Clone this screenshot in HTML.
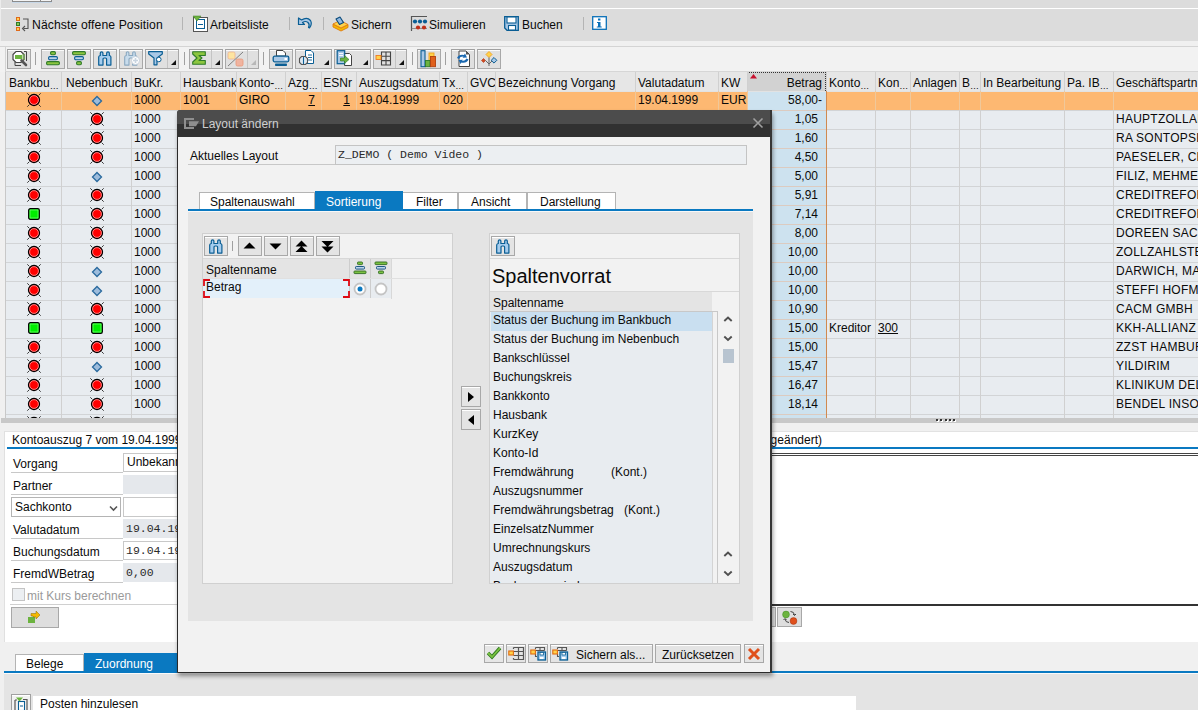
<!DOCTYPE html><html><head><meta charset="utf-8"><style>
*{box-sizing:border-box}
html,body{margin:0;padding:0;width:1198px;height:710px;overflow:hidden;background:#f0f0f0;font-family:"Liberation Sans",sans-serif;font-size:12px;color:#0a0a0a}
div{position:absolute}
.t{white-space:nowrap;line-height:19px;height:19px}
.m{font-family:"Liberation Mono",monospace;font-size:11.5px;color:#2a2a2a}
svg{position:absolute;overflow:visible}
</style></head><body>
<div style="left:0px;top:0px;width:1198px;height:8px;background:#dcdcdc"></div>
<div style="left:12px;top:-9px;width:40px;height:11px;background:#f4f4f4;border:1px solid #8c8c8c;border-top:none;box-shadow:0 1px 0 #c8d8e8"></div>
<div style="left:40px;top:-9px;width:1px;height:11px;background:#8c8c8c"></div>
<div style="left:0px;top:8px;width:1198px;height:1px;background:#ffffff"></div>
<div style="left:0px;top:9px;width:1198px;height:32px;background:#dcdcdc"></div>
<div style="left:0px;top:41px;width:1198px;height:5px;background:#f0f0f0"></div>
<div style="left:0px;top:0px;width:1px;height:41px;background:#ececec"></div>
<div style="left:182px;top:17px;width:1px;height:13px;background:#b4b4b4"></div>
<div style="left:289px;top:17px;width:1px;height:13px;background:#b4b4b4"></div>
<div style="left:323px;top:17px;width:1px;height:13px;background:#b4b4b4"></div>
<div style="left:583px;top:17px;width:1px;height:13px;background:#b4b4b4"></div>
<svg style="left:15px;top:16px" width="16" height="16" viewBox="0 0 16 16">
<rect x="1.5" y="1.5" width="3" height="3" fill="#ffd050" stroke="#e06a1a" stroke-width="1"/>
<rect x="1.5" y="6.5" width="3" height="3" fill="#8cc850" stroke="#2f7a2a" stroke-width="1"/>
<rect x="1.5" y="11.5" width="3" height="3" fill="#ffd050" stroke="#e06a1a" stroke-width="1"/>
<path d="M8 3H13V12.5H8.5" fill="none" stroke="#555" stroke-width="1.1"/>
<path d="M10 10L7.5 12.5L10 15" fill="none" stroke="#555" stroke-width="1.1"/></svg>
<svg style="left:193px;top:16px" width="16" height="16" viewBox="0 0 16 16">
<rect x="0.5" y="1.5" width="14" height="14" fill="#fff" stroke="#555" stroke-width="1"/>
<rect x="3.5" y="3.5" width="8" height="9" fill="#fff" stroke="#0a5e94" stroke-width="1"/>
<path d="M5 8.5H10" stroke="#0a5e94" stroke-width="1"/>
<path d="M0 0H8L4 5Z" fill="#6cb33f" stroke="#3a7a20" stroke-width="0.5"/></svg>
<svg style="left:297px;top:16px" width="17" height="13" viewBox="0 0 17 13">
<path d="M1.5 2V8.5H7.5L5.5 6.5Q8.5 4.5 11 6.5Q13 8.5 11.5 11.5L12.5 12Q15.5 8 13.5 4.5Q10 0.5 4.5 4Z" fill="#a9c8e6" stroke="#0a5e94" stroke-width="1.2" stroke-linejoin="round"/></svg>
<svg style="left:332px;top:16px" width="17" height="16" viewBox="0 0 17 16">
<path d="M1 8L9 12L16 8.5V11.5L9 15L1 11Z" fill="#f5b800" stroke="#e07a10" stroke-width="0.9"/>
<path d="M1 8L8 4.5L16 8.5L9 12Z" fill="#ffd24a" stroke="#e07a10" stroke-width="0.9"/>
<path d="M4 3L8 1L11.5 6.5L7.5 8.5Z" fill="#8fb8e0" stroke="#0a4a7a" stroke-width="1.1" stroke-linejoin="round"/></svg>
<svg style="left:410px;top:15px" width="18" height="17" viewBox="0 0 18 17">
<path d="M1.5 16V1.5H17" fill="none" stroke="#555" stroke-width="1.2"/>
<path d="M1.5 13.5H17" stroke="#777" stroke-width="0.8"/>
<circle cx="5" cy="6.5" r="2.1" fill="#0a5e94"/><circle cx="10" cy="6.5" r="2.1" fill="#0a5e94"/><circle cx="15" cy="6.5" r="2.1" fill="#0a5e94"/>
<circle cx="8" cy="12.5" r="2.1" fill="#c03018"/><circle cx="14" cy="12.5" r="2.1" fill="#c03018"/></svg>
<svg style="left:504px;top:16px" width="16" height="16" viewBox="0 0 16 16">
<path d="M0.7 0.7H14.3V14.3H3L0.7 12Z" fill="#a9c8e6" stroke="#0a5e94" stroke-width="1.3"/>
<rect x="3" y="1" width="9" height="6" fill="#fff" stroke="#0a5e94" stroke-width="1.1"/>
<rect x="4.5" y="9.5" width="7" height="4.5" fill="#fff" stroke="#0a5e94" stroke-width="1.1"/></svg>
<svg style="left:592px;top:16px" width="15" height="14" viewBox="0 0 15 14">
<rect x="0.7" y="0.7" width="13.6" height="12.6" fill="#fff" stroke="#0a70b8" stroke-width="1.3"/>
<rect x="6" y="2.5" width="2.4" height="2" fill="#0a70b8"/>
<path d="M5 6H8.5V10.5H9.7V11.5H4.8V10.5H6V7H5Z" fill="#0a70b8"/></svg>
<div class="t" style="left:32px;top:16px;font-size:12.2px;letter-spacing:0.1px">Nächste offene Position</div>
<div class="t" style="left:210px;top:16px;">Arbeitsliste</div>
<div class="t" style="left:351px;top:16px;">Sichern</div>
<div class="t" style="left:429px;top:16px;">Simulieren</div>
<div class="t" style="left:522px;top:16px;">Buchen</div>
<div style="left:0px;top:46px;width:1198px;height:26px;background:#f2f2f2;border-top:1px solid #d4d4d4"></div>
<div style="left:5px;top:46px;width:1px;height:26px;background:#d4d4d4"></div>
<div style="left:7px;top:49px;width:24px;height:20px;background:#e0e0e0;border:1px solid #a8a8a8;border-top-color:#a0a0a0;box-shadow:inset 0 1px 0 #fafafa;"></div>
<div style="left:41px;top:49px;width:24px;height:20px;background:#e0e0e0;border:1px solid #a8a8a8;border-top-color:#a0a0a0;box-shadow:inset 0 1px 0 #fafafa;"></div>
<div style="left:67px;top:49px;width:24px;height:20px;background:#e0e0e0;border:1px solid #a8a8a8;border-top-color:#a0a0a0;box-shadow:inset 0 1px 0 #fafafa;"></div>
<div style="left:93px;top:49px;width:24px;height:20px;background:#e0e0e0;border:1px solid #a8a8a8;border-top-color:#a0a0a0;box-shadow:inset 0 1px 0 #fafafa;"></div>
<div style="left:119px;top:49px;width:24px;height:20px;background:#e0e0e0;border:1px solid #a8a8a8;border-top-color:#a0a0a0;box-shadow:inset 0 1px 0 #fafafa;"></div>
<div style="left:145px;top:49px;width:34px;height:20px;background:#e0e0e0;border:1px solid #a8a8a8;border-top-color:#a0a0a0;box-shadow:inset 0 1px 0 #fafafa;"></div>
<div style="left:167px;top:50px;width:1px;height:18px;background:#c4c4c4"></div>
<svg style="left:171px;top:60px" width="6" height="6"><path d="M5 0L5 5L0 5Z" fill="#111"/></svg>
<div style="left:189px;top:49px;width:34px;height:20px;background:#e0e0e0;border:1px solid #a8a8a8;border-top-color:#a0a0a0;box-shadow:inset 0 1px 0 #fafafa;"></div>
<div style="left:211px;top:50px;width:1px;height:18px;background:#c4c4c4"></div>
<svg style="left:215px;top:60px" width="6" height="6"><path d="M5 0L5 5L0 5Z" fill="#111"/></svg>
<div style="left:225px;top:49px;width:34px;height:20px;background:#e0e0e0;border:1px solid #a8a8a8;border-top-color:#a0a0a0;box-shadow:inset 0 1px 0 #fafafa;"></div>
<div style="left:247px;top:50px;width:1px;height:18px;background:#c4c4c4"></div>
<svg style="left:251px;top:60px" width="6" height="6"><path d="M5 0L5 5L0 5Z" fill="#b8b8b8"/></svg>
<div style="left:269px;top:49px;width:24px;height:20px;background:#e0e0e0;border:1px solid #a8a8a8;border-top-color:#a0a0a0;box-shadow:inset 0 1px 0 #fafafa;"></div>
<div style="left:295px;top:49px;width:37px;height:20px;background:#e0e0e0;border:1px solid #a8a8a8;border-top-color:#a0a0a0;box-shadow:inset 0 1px 0 #fafafa;"></div>
<svg style="left:324px;top:60px" width="6" height="6"><path d="M5 0L5 5L0 5Z" fill="#111"/></svg>
<div style="left:334px;top:49px;width:37px;height:20px;background:#e0e0e0;border:1px solid #a8a8a8;border-top-color:#a0a0a0;box-shadow:inset 0 1px 0 #fafafa;"></div>
<svg style="left:363px;top:60px" width="6" height="6"><path d="M5 0L5 5L0 5Z" fill="#111"/></svg>
<div style="left:373px;top:49px;width:34px;height:20px;background:#e0e0e0;border:1px solid #a8a8a8;border-top-color:#a0a0a0;box-shadow:inset 0 1px 0 #fafafa;"></div>
<div style="left:395px;top:50px;width:1px;height:18px;background:#c4c4c4"></div>
<svg style="left:399px;top:60px" width="6" height="6"><path d="M5 0L5 5L0 5Z" fill="#111"/></svg>
<div style="left:417px;top:49px;width:24px;height:20px;background:#e0e0e0;border:1px solid #a8a8a8;border-top-color:#a0a0a0;box-shadow:inset 0 1px 0 #fafafa;"></div>
<div style="left:451px;top:49px;width:24px;height:20px;background:#e0e0e0;border:1px solid #a8a8a8;border-top-color:#a0a0a0;box-shadow:inset 0 1px 0 #fafafa;"></div>
<div style="left:477px;top:49px;width:24px;height:20px;background:#e0e0e0;border:1px solid #a8a8a8;border-top-color:#a0a0a0;box-shadow:inset 0 1px 0 #fafafa;"></div>
<svg style="left:11px;top:50px" width="18" height="17" viewBox="0 0 18 17"><path d="M5 1.5H10L13 4.5V9.5L10 12.5H5L2 9.5V4.5Z" fill="#fff" stroke="#444" stroke-width="1.2"/>
<rect x="4" y="5" width="7" height="4" fill="#6cb33f"/>
<path d="M11 5H14M11 7H14M11 9H14" stroke="#6cb33f" stroke-width="0.9"/>
<path d="M13 1.5H15.5V11" fill="none" stroke="#444" stroke-width="1"/>
<path d="M4 12V15.5H10" fill="none" stroke="#444" stroke-width="1"/>
<path d="M10.5 10.5L15 15" stroke="#555" stroke-width="2.6" stroke-linecap="round"/></svg>
<svg style="left:46px;top:51px" width="14" height="15" viewBox="0 0 14 15"><rect x="4.6" y="0.6" width="4.8" height="3.2" rx="1.2" fill="#8cc63f" stroke="#2f7a2a" stroke-width="1.1"/><rect x="2.6" y="5.6" width="8.8" height="3.2" rx="1.2" fill="#bcd4ea" stroke="#0a5e94" stroke-width="1.1"/><rect x="0.6" y="10.6" width="12.8" height="3.2" rx="1.2" fill="#8cc63f" stroke="#2f7a2a" stroke-width="1.1"/></svg>
<svg style="left:72px;top:51px" width="14" height="15" viewBox="0 0 14 15"><rect x="0.6" y="0.6" width="12.8" height="3.2" rx="1.2" fill="#8cc63f" stroke="#2f7a2a" stroke-width="1.1"/><rect x="2.6" y="5.6" width="8.8" height="3.2" rx="1.2" fill="#bcd4ea" stroke="#0a5e94" stroke-width="1.1"/><rect x="4.6" y="10.6" width="4.8" height="3.2" rx="1.2" fill="#8cc63f" stroke="#2f7a2a" stroke-width="1.1"/></svg>
<svg style="left:97px;top:51px" width="16" height="15" viewBox="0 0 16 15"><path d="M1.7 14.1V6Q1.7 4.8 3.3 4.5V1.9Q3.3 0.8 4.6 0.8Q5.9 0.8 5.9 1.9V4.5H9.7V1.9Q9.7 0.8 11 0.8Q12.3 0.8 12.3 1.9V4.5Q13.9 4.8 13.9 6V14.1H9.6V8.2Q9.6 7 8.4 7H7.2Q6 7 6 8.2V14.1Z" fill="#a6cdee" stroke="#0a5e94" stroke-width="1.2" stroke-linejoin="round"/></svg>
<svg style="left:123px;top:51px" width="18" height="15" viewBox="0 0 18 15"><path d="M1.7 14.1V6Q1.7 4.8 3.3 4.5V1.9Q3.3 0.8 4.6 0.8Q5.9 0.8 5.9 1.9V4.5H9.7V1.9Q9.7 0.8 11 0.8Q12.3 0.8 12.3 1.9V4.5Q13.9 4.8 13.9 6V14.1H9.6V8.2Q9.6 7 8.4 7H7.2Q6 7 6 8.2V14.1Z" fill="#c8dcec" stroke="#8aa8c0" stroke-width="1.1" stroke-linejoin="round"/>
<circle cx="12.5" cy="9.5" r="4" fill="#fff" stroke="#c0ccd8" stroke-width="0.8"/><path d="M10 9.5H15M12.5 7V12" stroke="#c8d4e0" stroke-width="1.6"/></svg>
<svg style="left:148px;top:51px" width="15" height="15" viewBox="0 0 15 15"><path d="M0.7 0.7H14.3V3L9 7V13.8H6V7L0.7 3Z" fill="#a9c8e6" stroke="#0a5e94" stroke-width="1.2" stroke-linejoin="round"/>
<circle cx="10.8" cy="8.5" r="2.3" fill="#fff" stroke="#0a5e94" stroke-width="1"/></svg>
<svg style="left:192px;top:51px" width="14" height="14" viewBox="0 0 14 14"><path d="M0.7 0.7H13.3V4.5H7L10 7L7 9.5H13.3V13.3H0.7V11L5 7L0.7 3Z" fill="#8cc63f" stroke="#2f7a2a" stroke-width="1.1" stroke-linejoin="round"/></svg>
<svg style="left:227px;top:51px" width="20" height="16" viewBox="0 0 20 16"><rect x="1" y="1" width="7" height="7" rx="1.5" fill="#fde4a0" stroke="#f0b090" stroke-width="0.8"/>
<rect x="9" y="8" width="7" height="7" rx="1.5" fill="#f0b4a0" stroke="#e89878" stroke-width="0.8"/>
<path d="M1 15L16 1" stroke="#555" stroke-width="0.7"/></svg>
<svg style="left:272px;top:50px" width="18" height="17" viewBox="0 0 18 17"><path d="M4.5 0.5H11L13.5 3V6H4.5Z" fill="#fff" stroke="#444" stroke-width="1"/>
<rect x="1.2" y="6.2" width="15.6" height="5.6" rx="1.5" fill="#a9c8e6" stroke="#0a5e94" stroke-width="1.3"/>
<rect x="12.5" y="8" width="2.5" height="2" fill="#fff"/>
<rect x="3" y="13.5" width="12" height="2.5" rx="0.8" fill="#0a5e94"/></svg>
<svg style="left:298px;top:50px" width="17" height="17" viewBox="0 0 17 17"><path d="M7.5 0.5H13L15.5 3V13.5H7.5Z" fill="#fff" stroke="#0a5e94" stroke-width="1"/>
<path d="M10 5H14M10 7.5H14M10 10H14" stroke="#0a5e94" stroke-width="0.9"/>
<path d="M3.5 6.5H7.5L9.5 8.5V12.5L7.5 14.5H3.5L1.5 12.5V8.5Z" fill="#dfe9f2" stroke="#555" stroke-width="1.1"/>
<path d="M5.5 7V14" stroke="#0a5e94" stroke-width="1.1"/></svg>
<svg style="left:336px;top:50px" width="17" height="17" viewBox="0 0 17 17"><path d="M8.5 3.5H13.5L15.5 5.5V15.5H8.5Z" fill="#fff" stroke="#444" stroke-width="1"/>
<rect x="1.2" y="0.7" width="7.5" height="13" fill="#a9c8e6" stroke="#0a5e94" stroke-width="1.2"/>
<path d="M3 3.5H7M3 5.5H7" stroke="#fff" stroke-width="0.9"/>
<path d="M4.5 8H8.5V5.5L13 9.5L8.5 13.5V11H4.5Z" fill="#6cb33f" stroke="#2f7a2a" stroke-width="0.6"/></svg>
<svg style="left:375px;top:51px" width="17" height="15" viewBox="0 0 17 15"><path d="M6.5 1H15.5V14H6.5ZM6.5 5.3H15.5M6.5 9.6H15.5M11 1V14" fill="none" stroke="#444" stroke-width="1.1"/>
<rect x="1" y="4.5" width="5" height="4" fill="#ffd24a" stroke="#f07a20" stroke-width="0.9"/></svg>
<svg style="left:420px;top:50px" width="18" height="18" viewBox="0 0 18 18"><rect x="1" y="0.7" width="4" height="16" fill="#a9c8e6" stroke="#0a5e94" stroke-width="1.1"/>
<rect x="9" y="3" width="5" height="8" fill="#ffd24a" stroke="#f0a020" stroke-width="0.9"/>
<rect x="5.5" y="10.5" width="4.5" height="6.2" fill="#6cb33f" stroke="#2f7a2a" stroke-width="0.9"/>
<rect x="10.5" y="6.5" width="5" height="10.2" fill="#e0601c" stroke="#b04010" stroke-width="0.9"/></svg>
<svg style="left:454px;top:50px" width="18" height="18" viewBox="0 0 18 18"><path d="M5 1H12L15.5 4.5V16.5H5Z" fill="#fff" stroke="#444" stroke-width="1"/><path d="M12 1V4.5H15.5Z" fill="#555"/>
<path d="M3 8Q5 4 10 5L11 3.5L13 7.5L8.5 7.8L9.5 6.6Q6 6.5 5 9Z" fill="#1a68b0"/>
<path d="M14.5 9.5Q12.5 13.5 7.5 12.5L6.5 14L4.5 10L9 9.7L8 10.9Q11.5 11 12.5 8.5Z" fill="#1a68b0"/></svg>
<svg style="left:480px;top:50px" width="18" height="18" viewBox="0 0 18 18"><path d="M9 1.5L12 4.5L9 7.5L6 4.5Z" fill="#ffd24a" stroke="#f0a020" stroke-width="0.9"/>
<path d="M14 7.5L16.8 10.3L14 13.1L11.2 10.3Z" fill="#a9c8e6" stroke="#0a5e94" stroke-width="1"/>
<path d="M3.5 8.5L5.5 10.5L3.5 12.5L1.5 10.5Z" fill="#d04a20" stroke="#b03010" stroke-width="0.6"/>
<path d="M9 7.5V16M5.5 10.5L9 14L12 11" fill="none" stroke="#666" stroke-width="1"/></svg>
<div style="left:35px;top:52px;width:1px;height:13px;background:#a0a0a0"></div>
<div style="left:184px;top:52px;width:1px;height:13px;background:#a0a0a0"></div>
<div style="left:263px;top:52px;width:1px;height:13px;background:#a0a0a0"></div>
<div style="left:412px;top:52px;width:1px;height:13px;background:#a0a0a0"></div>
<div style="left:445px;top:52px;width:1px;height:13px;background:#a0a0a0"></div>
<div style="left:6px;top:72px;width:1192px;height:346px;background:#e8ecf0"></div>
<div style="left:5px;top:71px;width:1193px;height:1px;background:#d6d6d6"></div>
<div style="left:6px;top:72px;width:1192px;height:19px;background:#e6e6e6"></div>
<div style="left:6px;top:91px;width:1192px;height:1px;background:#ffffff"></div>
<div class="t" style="left:6px;top:74px;width:55px;text-align:left;padding-left:3px;overflow:hidden">Bankbu<span style="font-size:9px;letter-spacing:-0.5px;vertical-align:-2px">…</span></div>
<div class="t" style="left:61px;top:74px;width:70px;text-align:left;padding-left:5px;overflow:hidden">Nebenbuch</div>
<div style="left:61px;top:72px;width:1px;height:19px;background:#d0d0d0"></div>
<div class="t" style="left:131px;top:74px;width:49px;text-align:left;padding-left:3px;overflow:hidden">BuKr.</div>
<div style="left:131px;top:72px;width:1px;height:19px;background:#d0d0d0"></div>
<div class="t" style="left:180px;top:74px;width:56px;text-align:left;padding-left:3px;overflow:hidden">Hausbank</div>
<div style="left:180px;top:72px;width:1px;height:19px;background:#d0d0d0"></div>
<div class="t" style="left:236px;top:74px;width:49px;text-align:left;padding-left:3px;overflow:hidden">Konto-<span style="font-size:9px;letter-spacing:-0.5px;vertical-align:-2px">…</span></div>
<div style="left:236px;top:72px;width:1px;height:19px;background:#d0d0d0"></div>
<div class="t" style="left:285px;top:74px;width:36px;text-align:left;padding-left:3px;overflow:hidden">Azg<span style="font-size:9px;letter-spacing:-0.5px;vertical-align:-2px">…</span></div>
<div style="left:285px;top:72px;width:1px;height:19px;background:#d0d0d0"></div>
<div class="t" style="left:321px;top:74px;width:35px;text-align:right;padding-right:4px;overflow:hidden">ESNr</div>
<div style="left:321px;top:72px;width:1px;height:19px;background:#d0d0d0"></div>
<div class="t" style="left:356px;top:74px;width:83px;text-align:left;padding-left:3px;overflow:hidden">Auszugsdatum</div>
<div style="left:356px;top:72px;width:1px;height:19px;background:#d0d0d0"></div>
<div class="t" style="left:439px;top:74px;width:28px;text-align:left;padding-left:3px;overflow:hidden">Tx<span style="font-size:9px;letter-spacing:-0.5px;vertical-align:-2px">…</span></div>
<div style="left:439px;top:72px;width:1px;height:19px;background:#d0d0d0"></div>
<div class="t" style="left:467px;top:74px;width:28px;text-align:left;padding-left:3px;overflow:hidden">GVC</div>
<div style="left:467px;top:72px;width:1px;height:19px;background:#d0d0d0"></div>
<div class="t" style="left:495px;top:74px;width:140px;text-align:left;padding-left:3px;overflow:hidden">Bezeichnung Vorgang</div>
<div style="left:495px;top:72px;width:1px;height:19px;background:#d0d0d0"></div>
<div class="t" style="left:635px;top:74px;width:83px;text-align:left;padding-left:3px;overflow:hidden">Valutadatum</div>
<div style="left:635px;top:72px;width:1px;height:19px;background:#d0d0d0"></div>
<div class="t" style="left:718px;top:74px;width:29px;text-align:left;padding-left:3px;overflow:hidden">KW</div>
<div style="left:718px;top:72px;width:1px;height:19px;background:#d0d0d0"></div>
<div style="left:747px;top:72px;width:79px;height:19px;background:#d2d2d2;border:1px dotted #333;border-bottom:none"></div>
<svg style="left:750px;top:74px" width="8" height="5"><path d="M0 4.5L3.5 0L7 4.5Z" fill="#c8102e"/></svg>
<div class="t" style="left:747px;top:74px;width:79px;text-align:right;padding-right:4px;overflow:hidden">Betrag</div>
<div style="left:747px;top:72px;width:1px;height:19px;background:#d0d0d0"></div>
<div class="t" style="left:826px;top:74px;width:49px;text-align:left;padding-left:3px;overflow:hidden">Konto<span style="font-size:9px;letter-spacing:-0.5px;vertical-align:-2px">…</span></div>
<div style="left:826px;top:72px;width:1px;height:19px;background:#d0d0d0"></div>
<div class="t" style="left:875px;top:74px;width:35px;text-align:left;padding-left:3px;overflow:hidden">Kon<span style="font-size:9px;letter-spacing:-0.5px;vertical-align:-2px">…</span></div>
<div style="left:875px;top:72px;width:1px;height:19px;background:#d0d0d0"></div>
<div class="t" style="left:910px;top:74px;width:49px;text-align:left;padding-left:3px;overflow:hidden">Anlagen</div>
<div style="left:910px;top:72px;width:1px;height:19px;background:#d0d0d0"></div>
<div class="t" style="left:959px;top:74px;width:21px;text-align:left;padding-left:3px;overflow:hidden">B<span style="font-size:9px;letter-spacing:-0.5px;vertical-align:-2px">…</span></div>
<div style="left:959px;top:72px;width:1px;height:19px;background:#d0d0d0"></div>
<div class="t" style="left:980px;top:74px;width:84px;text-align:left;padding-left:3px;overflow:hidden">In Bearbeitung</div>
<div style="left:980px;top:72px;width:1px;height:19px;background:#d0d0d0"></div>
<div class="t" style="left:1064px;top:74px;width:49px;text-align:left;padding-left:3px;overflow:hidden">Pa. IB<span style="font-size:9px;letter-spacing:-0.5px;vertical-align:-2px">…</span></div>
<div style="left:1064px;top:72px;width:1px;height:19px;background:#d0d0d0"></div>
<div class="t" style="left:1113px;top:74px;width:117px;text-align:left;padding-left:3px;overflow:hidden">Geschäftspartn</div>
<div style="left:1113px;top:72px;width:1px;height:19px;background:#d0d0d0"></div>
<div style="left:0;top:0;width:1198px;height:418px;overflow:hidden">
<div style="left:6px;top:91px;width:741px;height:19px;background:#fdb872"></div>
<div style="left:826px;top:91px;width:372px;height:19px;background:#fdb872"></div>
<div style="left:747px;top:91px;width:79px;height:19px;background:#cde2ef"></div>
<div style="left:6px;top:91px;width:1192px;height:1px;background:#e2e2e2"></div>
<div style="left:61px;top:91px;width:1px;height:19px;background:#f0c89a"></div>
<div style="left:131px;top:91px;width:1px;height:19px;background:#f0c89a"></div>
<div style="left:180px;top:91px;width:1px;height:19px;background:#f0c89a"></div>
<div style="left:236px;top:91px;width:1px;height:19px;background:#f0c89a"></div>
<div style="left:285px;top:91px;width:1px;height:19px;background:#f0c89a"></div>
<div style="left:321px;top:91px;width:1px;height:19px;background:#f0c89a"></div>
<div style="left:356px;top:91px;width:1px;height:19px;background:#f0c89a"></div>
<div style="left:439px;top:91px;width:1px;height:19px;background:#f0c89a"></div>
<div style="left:467px;top:91px;width:1px;height:19px;background:#f0c89a"></div>
<div style="left:495px;top:91px;width:1px;height:19px;background:#f0c89a"></div>
<div style="left:635px;top:91px;width:1px;height:19px;background:#f0c89a"></div>
<div style="left:718px;top:91px;width:1px;height:19px;background:#f0c89a"></div>
<div style="left:747px;top:91px;width:1px;height:19px;background:#f0c89a"></div>
<div style="left:826px;top:91px;width:1px;height:19px;background:#d08a50"></div>
<div style="left:875px;top:91px;width:1px;height:19px;background:#f0c89a"></div>
<div style="left:910px;top:91px;width:1px;height:19px;background:#f0c89a"></div>
<div style="left:959px;top:91px;width:1px;height:19px;background:#f0c89a"></div>
<div style="left:980px;top:91px;width:1px;height:19px;background:#f0c89a"></div>
<div style="left:1064px;top:91px;width:1px;height:19px;background:#f0c89a"></div>
<div style="left:1113px;top:91px;width:1px;height:19px;background:#f0c89a"></div>
<svg style="left:26px;top:92px" width="16" height="16" viewBox="0 0 16 16">
<path d="M1.3 1.3L3.3 3.3M14.7 1.3L12.7 3.3M1.3 14.7L3.3 12.7M14.7 14.7L12.7 12.7" stroke="#222" stroke-width="0.9"/>
<circle cx="8" cy="8" r="5.5" fill="#ff0000" stroke="#000" stroke-width="1.3"/>
<circle cx="8" cy="8" r="4.4" fill="none" stroke="#ffb8b8" stroke-width="0.7"/></svg>
<svg style="left:91px;top:95px" width="12" height="12" viewBox="0 0 12 12">
<path d="M6 1.5L10.5 6L6 10.5L1.5 6Z" fill="#9dbcdc" stroke="#2a6a9e" stroke-width="1.3"/></svg>
<div class="t" style="left:134px;top:91px;">1000</div>
<div class="t" style="left:747px;top:91px;width:79px;text-align:right;padding-right:4px">58,00-</div>
<div style="left:747px;top:110px;width:79px;height:19px;background:#cde2ef"></div>
<div style="left:6px;top:110px;width:1192px;height:1px;background:#d2d4d6"></div>
<div style="left:747px;top:110px;width:79px;height:1px;background:#dccbc0"></div>
<div style="left:61px;top:110px;width:1px;height:19px;background:#d0d0d0"></div>
<div style="left:131px;top:110px;width:1px;height:19px;background:#d0d0d0"></div>
<div style="left:180px;top:110px;width:1px;height:19px;background:#d0d0d0"></div>
<div style="left:236px;top:110px;width:1px;height:19px;background:#d0d0d0"></div>
<div style="left:285px;top:110px;width:1px;height:19px;background:#d0d0d0"></div>
<div style="left:321px;top:110px;width:1px;height:19px;background:#d0d0d0"></div>
<div style="left:356px;top:110px;width:1px;height:19px;background:#d0d0d0"></div>
<div style="left:439px;top:110px;width:1px;height:19px;background:#d0d0d0"></div>
<div style="left:467px;top:110px;width:1px;height:19px;background:#d0d0d0"></div>
<div style="left:495px;top:110px;width:1px;height:19px;background:#d0d0d0"></div>
<div style="left:635px;top:110px;width:1px;height:19px;background:#d0d0d0"></div>
<div style="left:718px;top:110px;width:1px;height:19px;background:#d0d0d0"></div>
<div style="left:747px;top:110px;width:1px;height:19px;background:#d0d0d0"></div>
<div style="left:826px;top:110px;width:1px;height:19px;background:#d08a50"></div>
<div style="left:875px;top:110px;width:1px;height:19px;background:#d0d0d0"></div>
<div style="left:910px;top:110px;width:1px;height:19px;background:#d0d0d0"></div>
<div style="left:959px;top:110px;width:1px;height:19px;background:#d0d0d0"></div>
<div style="left:980px;top:110px;width:1px;height:19px;background:#d0d0d0"></div>
<div style="left:1064px;top:110px;width:1px;height:19px;background:#d0d0d0"></div>
<div style="left:1113px;top:110px;width:1px;height:19px;background:#d0d0d0"></div>
<svg style="left:26px;top:111px" width="16" height="16" viewBox="0 0 16 16">
<path d="M1.3 1.3L3.3 3.3M14.7 1.3L12.7 3.3M1.3 14.7L3.3 12.7M14.7 14.7L12.7 12.7" stroke="#222" stroke-width="0.9"/>
<circle cx="8" cy="8" r="5.5" fill="#ff0000" stroke="#000" stroke-width="1.3"/>
<circle cx="8" cy="8" r="4.4" fill="none" stroke="#ffb8b8" stroke-width="0.7"/></svg>
<svg style="left:89px;top:111px" width="16" height="16" viewBox="0 0 16 16">
<path d="M1.3 1.3L3.3 3.3M14.7 1.3L12.7 3.3M1.3 14.7L3.3 12.7M14.7 14.7L12.7 12.7" stroke="#222" stroke-width="0.9"/>
<circle cx="8" cy="8" r="5.5" fill="#ff0000" stroke="#000" stroke-width="1.3"/>
<circle cx="8" cy="8" r="4.4" fill="none" stroke="#ffb8b8" stroke-width="0.7"/></svg>
<div class="t" style="left:134px;top:110px;">1000</div>
<div class="t" style="left:747px;top:110px;width:79px;text-align:right;padding-right:8px">1,05</div>
<div class="t" style="left:1116px;top:110px;letter-spacing:0.25px">HAUPTZOLLAMT</div>
<div style="left:747px;top:129px;width:79px;height:19px;background:#cde2ef"></div>
<div style="left:6px;top:129px;width:1192px;height:1px;background:#d2d4d6"></div>
<div style="left:747px;top:129px;width:79px;height:1px;background:#dccbc0"></div>
<div style="left:61px;top:129px;width:1px;height:19px;background:#d0d0d0"></div>
<div style="left:131px;top:129px;width:1px;height:19px;background:#d0d0d0"></div>
<div style="left:180px;top:129px;width:1px;height:19px;background:#d0d0d0"></div>
<div style="left:236px;top:129px;width:1px;height:19px;background:#d0d0d0"></div>
<div style="left:285px;top:129px;width:1px;height:19px;background:#d0d0d0"></div>
<div style="left:321px;top:129px;width:1px;height:19px;background:#d0d0d0"></div>
<div style="left:356px;top:129px;width:1px;height:19px;background:#d0d0d0"></div>
<div style="left:439px;top:129px;width:1px;height:19px;background:#d0d0d0"></div>
<div style="left:467px;top:129px;width:1px;height:19px;background:#d0d0d0"></div>
<div style="left:495px;top:129px;width:1px;height:19px;background:#d0d0d0"></div>
<div style="left:635px;top:129px;width:1px;height:19px;background:#d0d0d0"></div>
<div style="left:718px;top:129px;width:1px;height:19px;background:#d0d0d0"></div>
<div style="left:747px;top:129px;width:1px;height:19px;background:#d0d0d0"></div>
<div style="left:826px;top:129px;width:1px;height:19px;background:#d08a50"></div>
<div style="left:875px;top:129px;width:1px;height:19px;background:#d0d0d0"></div>
<div style="left:910px;top:129px;width:1px;height:19px;background:#d0d0d0"></div>
<div style="left:959px;top:129px;width:1px;height:19px;background:#d0d0d0"></div>
<div style="left:980px;top:129px;width:1px;height:19px;background:#d0d0d0"></div>
<div style="left:1064px;top:129px;width:1px;height:19px;background:#d0d0d0"></div>
<div style="left:1113px;top:129px;width:1px;height:19px;background:#d0d0d0"></div>
<svg style="left:26px;top:130px" width="16" height="16" viewBox="0 0 16 16">
<path d="M1.3 1.3L3.3 3.3M14.7 1.3L12.7 3.3M1.3 14.7L3.3 12.7M14.7 14.7L12.7 12.7" stroke="#222" stroke-width="0.9"/>
<circle cx="8" cy="8" r="5.5" fill="#ff0000" stroke="#000" stroke-width="1.3"/>
<circle cx="8" cy="8" r="4.4" fill="none" stroke="#ffb8b8" stroke-width="0.7"/></svg>
<svg style="left:89px;top:130px" width="16" height="16" viewBox="0 0 16 16">
<path d="M1.3 1.3L3.3 3.3M14.7 1.3L12.7 3.3M1.3 14.7L3.3 12.7M14.7 14.7L12.7 12.7" stroke="#222" stroke-width="0.9"/>
<circle cx="8" cy="8" r="5.5" fill="#ff0000" stroke="#000" stroke-width="1.3"/>
<circle cx="8" cy="8" r="4.4" fill="none" stroke="#ffb8b8" stroke-width="0.7"/></svg>
<div class="t" style="left:134px;top:129px;">1000</div>
<div class="t" style="left:747px;top:129px;width:79px;text-align:right;padding-right:8px">1,60</div>
<div class="t" style="left:1116px;top:129px;letter-spacing:0.25px">RA SONTOPSKI</div>
<div style="left:747px;top:148px;width:79px;height:19px;background:#cde2ef"></div>
<div style="left:6px;top:148px;width:1192px;height:1px;background:#d2d4d6"></div>
<div style="left:747px;top:148px;width:79px;height:1px;background:#dccbc0"></div>
<div style="left:61px;top:148px;width:1px;height:19px;background:#d0d0d0"></div>
<div style="left:131px;top:148px;width:1px;height:19px;background:#d0d0d0"></div>
<div style="left:180px;top:148px;width:1px;height:19px;background:#d0d0d0"></div>
<div style="left:236px;top:148px;width:1px;height:19px;background:#d0d0d0"></div>
<div style="left:285px;top:148px;width:1px;height:19px;background:#d0d0d0"></div>
<div style="left:321px;top:148px;width:1px;height:19px;background:#d0d0d0"></div>
<div style="left:356px;top:148px;width:1px;height:19px;background:#d0d0d0"></div>
<div style="left:439px;top:148px;width:1px;height:19px;background:#d0d0d0"></div>
<div style="left:467px;top:148px;width:1px;height:19px;background:#d0d0d0"></div>
<div style="left:495px;top:148px;width:1px;height:19px;background:#d0d0d0"></div>
<div style="left:635px;top:148px;width:1px;height:19px;background:#d0d0d0"></div>
<div style="left:718px;top:148px;width:1px;height:19px;background:#d0d0d0"></div>
<div style="left:747px;top:148px;width:1px;height:19px;background:#d0d0d0"></div>
<div style="left:826px;top:148px;width:1px;height:19px;background:#d08a50"></div>
<div style="left:875px;top:148px;width:1px;height:19px;background:#d0d0d0"></div>
<div style="left:910px;top:148px;width:1px;height:19px;background:#d0d0d0"></div>
<div style="left:959px;top:148px;width:1px;height:19px;background:#d0d0d0"></div>
<div style="left:980px;top:148px;width:1px;height:19px;background:#d0d0d0"></div>
<div style="left:1064px;top:148px;width:1px;height:19px;background:#d0d0d0"></div>
<div style="left:1113px;top:148px;width:1px;height:19px;background:#d0d0d0"></div>
<svg style="left:26px;top:149px" width="16" height="16" viewBox="0 0 16 16">
<path d="M1.3 1.3L3.3 3.3M14.7 1.3L12.7 3.3M1.3 14.7L3.3 12.7M14.7 14.7L12.7 12.7" stroke="#222" stroke-width="0.9"/>
<circle cx="8" cy="8" r="5.5" fill="#ff0000" stroke="#000" stroke-width="1.3"/>
<circle cx="8" cy="8" r="4.4" fill="none" stroke="#ffb8b8" stroke-width="0.7"/></svg>
<svg style="left:89px;top:149px" width="16" height="16" viewBox="0 0 16 16">
<path d="M1.3 1.3L3.3 3.3M14.7 1.3L12.7 3.3M1.3 14.7L3.3 12.7M14.7 14.7L12.7 12.7" stroke="#222" stroke-width="0.9"/>
<circle cx="8" cy="8" r="5.5" fill="#ff0000" stroke="#000" stroke-width="1.3"/>
<circle cx="8" cy="8" r="4.4" fill="none" stroke="#ffb8b8" stroke-width="0.7"/></svg>
<div class="t" style="left:134px;top:148px;">1000</div>
<div class="t" style="left:747px;top:148px;width:79px;text-align:right;padding-right:8px">4,50</div>
<div class="t" style="left:1116px;top:148px;letter-spacing:0.25px">PAESELER, CHRISTIAN</div>
<div style="left:747px;top:167px;width:79px;height:19px;background:#cde2ef"></div>
<div style="left:6px;top:167px;width:1192px;height:1px;background:#d2d4d6"></div>
<div style="left:747px;top:167px;width:79px;height:1px;background:#dccbc0"></div>
<div style="left:61px;top:167px;width:1px;height:19px;background:#d0d0d0"></div>
<div style="left:131px;top:167px;width:1px;height:19px;background:#d0d0d0"></div>
<div style="left:180px;top:167px;width:1px;height:19px;background:#d0d0d0"></div>
<div style="left:236px;top:167px;width:1px;height:19px;background:#d0d0d0"></div>
<div style="left:285px;top:167px;width:1px;height:19px;background:#d0d0d0"></div>
<div style="left:321px;top:167px;width:1px;height:19px;background:#d0d0d0"></div>
<div style="left:356px;top:167px;width:1px;height:19px;background:#d0d0d0"></div>
<div style="left:439px;top:167px;width:1px;height:19px;background:#d0d0d0"></div>
<div style="left:467px;top:167px;width:1px;height:19px;background:#d0d0d0"></div>
<div style="left:495px;top:167px;width:1px;height:19px;background:#d0d0d0"></div>
<div style="left:635px;top:167px;width:1px;height:19px;background:#d0d0d0"></div>
<div style="left:718px;top:167px;width:1px;height:19px;background:#d0d0d0"></div>
<div style="left:747px;top:167px;width:1px;height:19px;background:#d0d0d0"></div>
<div style="left:826px;top:167px;width:1px;height:19px;background:#d08a50"></div>
<div style="left:875px;top:167px;width:1px;height:19px;background:#d0d0d0"></div>
<div style="left:910px;top:167px;width:1px;height:19px;background:#d0d0d0"></div>
<div style="left:959px;top:167px;width:1px;height:19px;background:#d0d0d0"></div>
<div style="left:980px;top:167px;width:1px;height:19px;background:#d0d0d0"></div>
<div style="left:1064px;top:167px;width:1px;height:19px;background:#d0d0d0"></div>
<div style="left:1113px;top:167px;width:1px;height:19px;background:#d0d0d0"></div>
<svg style="left:26px;top:168px" width="16" height="16" viewBox="0 0 16 16">
<path d="M1.3 1.3L3.3 3.3M14.7 1.3L12.7 3.3M1.3 14.7L3.3 12.7M14.7 14.7L12.7 12.7" stroke="#222" stroke-width="0.9"/>
<circle cx="8" cy="8" r="5.5" fill="#ff0000" stroke="#000" stroke-width="1.3"/>
<circle cx="8" cy="8" r="4.4" fill="none" stroke="#ffb8b8" stroke-width="0.7"/></svg>
<svg style="left:91px;top:171px" width="12" height="12" viewBox="0 0 12 12">
<path d="M6 1.5L10.5 6L6 10.5L1.5 6Z" fill="#9dbcdc" stroke="#2a6a9e" stroke-width="1.3"/></svg>
<div class="t" style="left:134px;top:167px;">1000</div>
<div class="t" style="left:747px;top:167px;width:79px;text-align:right;padding-right:8px">5,00</div>
<div class="t" style="left:1116px;top:167px;letter-spacing:0.25px">FILIZ, MEHMET</div>
<div style="left:747px;top:186px;width:79px;height:19px;background:#cde2ef"></div>
<div style="left:6px;top:186px;width:1192px;height:1px;background:#d2d4d6"></div>
<div style="left:747px;top:186px;width:79px;height:1px;background:#dccbc0"></div>
<div style="left:61px;top:186px;width:1px;height:19px;background:#d0d0d0"></div>
<div style="left:131px;top:186px;width:1px;height:19px;background:#d0d0d0"></div>
<div style="left:180px;top:186px;width:1px;height:19px;background:#d0d0d0"></div>
<div style="left:236px;top:186px;width:1px;height:19px;background:#d0d0d0"></div>
<div style="left:285px;top:186px;width:1px;height:19px;background:#d0d0d0"></div>
<div style="left:321px;top:186px;width:1px;height:19px;background:#d0d0d0"></div>
<div style="left:356px;top:186px;width:1px;height:19px;background:#d0d0d0"></div>
<div style="left:439px;top:186px;width:1px;height:19px;background:#d0d0d0"></div>
<div style="left:467px;top:186px;width:1px;height:19px;background:#d0d0d0"></div>
<div style="left:495px;top:186px;width:1px;height:19px;background:#d0d0d0"></div>
<div style="left:635px;top:186px;width:1px;height:19px;background:#d0d0d0"></div>
<div style="left:718px;top:186px;width:1px;height:19px;background:#d0d0d0"></div>
<div style="left:747px;top:186px;width:1px;height:19px;background:#d0d0d0"></div>
<div style="left:826px;top:186px;width:1px;height:19px;background:#d08a50"></div>
<div style="left:875px;top:186px;width:1px;height:19px;background:#d0d0d0"></div>
<div style="left:910px;top:186px;width:1px;height:19px;background:#d0d0d0"></div>
<div style="left:959px;top:186px;width:1px;height:19px;background:#d0d0d0"></div>
<div style="left:980px;top:186px;width:1px;height:19px;background:#d0d0d0"></div>
<div style="left:1064px;top:186px;width:1px;height:19px;background:#d0d0d0"></div>
<div style="left:1113px;top:186px;width:1px;height:19px;background:#d0d0d0"></div>
<svg style="left:26px;top:187px" width="16" height="16" viewBox="0 0 16 16">
<path d="M1.3 1.3L3.3 3.3M14.7 1.3L12.7 3.3M1.3 14.7L3.3 12.7M14.7 14.7L12.7 12.7" stroke="#222" stroke-width="0.9"/>
<circle cx="8" cy="8" r="5.5" fill="#ff0000" stroke="#000" stroke-width="1.3"/>
<circle cx="8" cy="8" r="4.4" fill="none" stroke="#ffb8b8" stroke-width="0.7"/></svg>
<svg style="left:89px;top:187px" width="16" height="16" viewBox="0 0 16 16">
<path d="M1.3 1.3L3.3 3.3M14.7 1.3L12.7 3.3M1.3 14.7L3.3 12.7M14.7 14.7L12.7 12.7" stroke="#222" stroke-width="0.9"/>
<circle cx="8" cy="8" r="5.5" fill="#ff0000" stroke="#000" stroke-width="1.3"/>
<circle cx="8" cy="8" r="4.4" fill="none" stroke="#ffb8b8" stroke-width="0.7"/></svg>
<div class="t" style="left:134px;top:186px;">1000</div>
<div class="t" style="left:747px;top:186px;width:79px;text-align:right;padding-right:8px">5,91</div>
<div class="t" style="left:1116px;top:186px;letter-spacing:0.25px">CREDITREFORM</div>
<div style="left:747px;top:205px;width:79px;height:19px;background:#cde2ef"></div>
<div style="left:6px;top:205px;width:1192px;height:1px;background:#d2d4d6"></div>
<div style="left:747px;top:205px;width:79px;height:1px;background:#dccbc0"></div>
<div style="left:61px;top:205px;width:1px;height:19px;background:#d0d0d0"></div>
<div style="left:131px;top:205px;width:1px;height:19px;background:#d0d0d0"></div>
<div style="left:180px;top:205px;width:1px;height:19px;background:#d0d0d0"></div>
<div style="left:236px;top:205px;width:1px;height:19px;background:#d0d0d0"></div>
<div style="left:285px;top:205px;width:1px;height:19px;background:#d0d0d0"></div>
<div style="left:321px;top:205px;width:1px;height:19px;background:#d0d0d0"></div>
<div style="left:356px;top:205px;width:1px;height:19px;background:#d0d0d0"></div>
<div style="left:439px;top:205px;width:1px;height:19px;background:#d0d0d0"></div>
<div style="left:467px;top:205px;width:1px;height:19px;background:#d0d0d0"></div>
<div style="left:495px;top:205px;width:1px;height:19px;background:#d0d0d0"></div>
<div style="left:635px;top:205px;width:1px;height:19px;background:#d0d0d0"></div>
<div style="left:718px;top:205px;width:1px;height:19px;background:#d0d0d0"></div>
<div style="left:747px;top:205px;width:1px;height:19px;background:#d0d0d0"></div>
<div style="left:826px;top:205px;width:1px;height:19px;background:#d08a50"></div>
<div style="left:875px;top:205px;width:1px;height:19px;background:#d0d0d0"></div>
<div style="left:910px;top:205px;width:1px;height:19px;background:#d0d0d0"></div>
<div style="left:959px;top:205px;width:1px;height:19px;background:#d0d0d0"></div>
<div style="left:980px;top:205px;width:1px;height:19px;background:#d0d0d0"></div>
<div style="left:1064px;top:205px;width:1px;height:19px;background:#d0d0d0"></div>
<div style="left:1113px;top:205px;width:1px;height:19px;background:#d0d0d0"></div>
<svg style="left:28px;top:208px" width="12" height="12" viewBox="0 0 12 12">
<rect x="0.7" y="0.7" width="10.6" height="10.6" rx="1.6" fill="#00ee00" stroke="#000" stroke-width="1.3"/>
<rect x="2" y="2" width="8" height="8" fill="none" stroke="#8cff8c" stroke-width="0.6"/></svg>
<svg style="left:89px;top:206px" width="16" height="16" viewBox="0 0 16 16">
<path d="M1.3 1.3L3.3 3.3M14.7 1.3L12.7 3.3M1.3 14.7L3.3 12.7M14.7 14.7L12.7 12.7" stroke="#222" stroke-width="0.9"/>
<circle cx="8" cy="8" r="5.5" fill="#ff0000" stroke="#000" stroke-width="1.3"/>
<circle cx="8" cy="8" r="4.4" fill="none" stroke="#ffb8b8" stroke-width="0.7"/></svg>
<div class="t" style="left:134px;top:205px;">1000</div>
<div class="t" style="left:747px;top:205px;width:79px;text-align:right;padding-right:8px">7,14</div>
<div class="t" style="left:1116px;top:205px;letter-spacing:0.25px">CREDITREFORM</div>
<div style="left:747px;top:224px;width:79px;height:19px;background:#cde2ef"></div>
<div style="left:6px;top:224px;width:1192px;height:1px;background:#d2d4d6"></div>
<div style="left:747px;top:224px;width:79px;height:1px;background:#dccbc0"></div>
<div style="left:61px;top:224px;width:1px;height:19px;background:#d0d0d0"></div>
<div style="left:131px;top:224px;width:1px;height:19px;background:#d0d0d0"></div>
<div style="left:180px;top:224px;width:1px;height:19px;background:#d0d0d0"></div>
<div style="left:236px;top:224px;width:1px;height:19px;background:#d0d0d0"></div>
<div style="left:285px;top:224px;width:1px;height:19px;background:#d0d0d0"></div>
<div style="left:321px;top:224px;width:1px;height:19px;background:#d0d0d0"></div>
<div style="left:356px;top:224px;width:1px;height:19px;background:#d0d0d0"></div>
<div style="left:439px;top:224px;width:1px;height:19px;background:#d0d0d0"></div>
<div style="left:467px;top:224px;width:1px;height:19px;background:#d0d0d0"></div>
<div style="left:495px;top:224px;width:1px;height:19px;background:#d0d0d0"></div>
<div style="left:635px;top:224px;width:1px;height:19px;background:#d0d0d0"></div>
<div style="left:718px;top:224px;width:1px;height:19px;background:#d0d0d0"></div>
<div style="left:747px;top:224px;width:1px;height:19px;background:#d0d0d0"></div>
<div style="left:826px;top:224px;width:1px;height:19px;background:#d08a50"></div>
<div style="left:875px;top:224px;width:1px;height:19px;background:#d0d0d0"></div>
<div style="left:910px;top:224px;width:1px;height:19px;background:#d0d0d0"></div>
<div style="left:959px;top:224px;width:1px;height:19px;background:#d0d0d0"></div>
<div style="left:980px;top:224px;width:1px;height:19px;background:#d0d0d0"></div>
<div style="left:1064px;top:224px;width:1px;height:19px;background:#d0d0d0"></div>
<div style="left:1113px;top:224px;width:1px;height:19px;background:#d0d0d0"></div>
<svg style="left:26px;top:225px" width="16" height="16" viewBox="0 0 16 16">
<path d="M1.3 1.3L3.3 3.3M14.7 1.3L12.7 3.3M1.3 14.7L3.3 12.7M14.7 14.7L12.7 12.7" stroke="#222" stroke-width="0.9"/>
<circle cx="8" cy="8" r="5.5" fill="#ff0000" stroke="#000" stroke-width="1.3"/>
<circle cx="8" cy="8" r="4.4" fill="none" stroke="#ffb8b8" stroke-width="0.7"/></svg>
<svg style="left:89px;top:225px" width="16" height="16" viewBox="0 0 16 16">
<path d="M1.3 1.3L3.3 3.3M14.7 1.3L12.7 3.3M1.3 14.7L3.3 12.7M14.7 14.7L12.7 12.7" stroke="#222" stroke-width="0.9"/>
<circle cx="8" cy="8" r="5.5" fill="#ff0000" stroke="#000" stroke-width="1.3"/>
<circle cx="8" cy="8" r="4.4" fill="none" stroke="#ffb8b8" stroke-width="0.7"/></svg>
<div class="t" style="left:134px;top:224px;">1000</div>
<div class="t" style="left:747px;top:224px;width:79px;text-align:right;padding-right:8px">8,00</div>
<div class="t" style="left:1116px;top:224px;letter-spacing:0.25px">DOREEN SACHSE</div>
<div style="left:747px;top:243px;width:79px;height:19px;background:#cde2ef"></div>
<div style="left:6px;top:243px;width:1192px;height:1px;background:#d2d4d6"></div>
<div style="left:747px;top:243px;width:79px;height:1px;background:#dccbc0"></div>
<div style="left:61px;top:243px;width:1px;height:19px;background:#d0d0d0"></div>
<div style="left:131px;top:243px;width:1px;height:19px;background:#d0d0d0"></div>
<div style="left:180px;top:243px;width:1px;height:19px;background:#d0d0d0"></div>
<div style="left:236px;top:243px;width:1px;height:19px;background:#d0d0d0"></div>
<div style="left:285px;top:243px;width:1px;height:19px;background:#d0d0d0"></div>
<div style="left:321px;top:243px;width:1px;height:19px;background:#d0d0d0"></div>
<div style="left:356px;top:243px;width:1px;height:19px;background:#d0d0d0"></div>
<div style="left:439px;top:243px;width:1px;height:19px;background:#d0d0d0"></div>
<div style="left:467px;top:243px;width:1px;height:19px;background:#d0d0d0"></div>
<div style="left:495px;top:243px;width:1px;height:19px;background:#d0d0d0"></div>
<div style="left:635px;top:243px;width:1px;height:19px;background:#d0d0d0"></div>
<div style="left:718px;top:243px;width:1px;height:19px;background:#d0d0d0"></div>
<div style="left:747px;top:243px;width:1px;height:19px;background:#d0d0d0"></div>
<div style="left:826px;top:243px;width:1px;height:19px;background:#d08a50"></div>
<div style="left:875px;top:243px;width:1px;height:19px;background:#d0d0d0"></div>
<div style="left:910px;top:243px;width:1px;height:19px;background:#d0d0d0"></div>
<div style="left:959px;top:243px;width:1px;height:19px;background:#d0d0d0"></div>
<div style="left:980px;top:243px;width:1px;height:19px;background:#d0d0d0"></div>
<div style="left:1064px;top:243px;width:1px;height:19px;background:#d0d0d0"></div>
<div style="left:1113px;top:243px;width:1px;height:19px;background:#d0d0d0"></div>
<svg style="left:26px;top:244px" width="16" height="16" viewBox="0 0 16 16">
<path d="M1.3 1.3L3.3 3.3M14.7 1.3L12.7 3.3M1.3 14.7L3.3 12.7M14.7 14.7L12.7 12.7" stroke="#222" stroke-width="0.9"/>
<circle cx="8" cy="8" r="5.5" fill="#ff0000" stroke="#000" stroke-width="1.3"/>
<circle cx="8" cy="8" r="4.4" fill="none" stroke="#ffb8b8" stroke-width="0.7"/></svg>
<svg style="left:89px;top:244px" width="16" height="16" viewBox="0 0 16 16">
<path d="M1.3 1.3L3.3 3.3M14.7 1.3L12.7 3.3M1.3 14.7L3.3 12.7M14.7 14.7L12.7 12.7" stroke="#222" stroke-width="0.9"/>
<circle cx="8" cy="8" r="5.5" fill="#ff0000" stroke="#000" stroke-width="1.3"/>
<circle cx="8" cy="8" r="4.4" fill="none" stroke="#ffb8b8" stroke-width="0.7"/></svg>
<div class="t" style="left:134px;top:243px;">1000</div>
<div class="t" style="left:747px;top:243px;width:79px;text-align:right;padding-right:8px">10,00</div>
<div class="t" style="left:1116px;top:243px;letter-spacing:0.25px">ZOLLZAHLSTELLE</div>
<div style="left:747px;top:262px;width:79px;height:19px;background:#cde2ef"></div>
<div style="left:6px;top:262px;width:1192px;height:1px;background:#d2d4d6"></div>
<div style="left:747px;top:262px;width:79px;height:1px;background:#dccbc0"></div>
<div style="left:61px;top:262px;width:1px;height:19px;background:#d0d0d0"></div>
<div style="left:131px;top:262px;width:1px;height:19px;background:#d0d0d0"></div>
<div style="left:180px;top:262px;width:1px;height:19px;background:#d0d0d0"></div>
<div style="left:236px;top:262px;width:1px;height:19px;background:#d0d0d0"></div>
<div style="left:285px;top:262px;width:1px;height:19px;background:#d0d0d0"></div>
<div style="left:321px;top:262px;width:1px;height:19px;background:#d0d0d0"></div>
<div style="left:356px;top:262px;width:1px;height:19px;background:#d0d0d0"></div>
<div style="left:439px;top:262px;width:1px;height:19px;background:#d0d0d0"></div>
<div style="left:467px;top:262px;width:1px;height:19px;background:#d0d0d0"></div>
<div style="left:495px;top:262px;width:1px;height:19px;background:#d0d0d0"></div>
<div style="left:635px;top:262px;width:1px;height:19px;background:#d0d0d0"></div>
<div style="left:718px;top:262px;width:1px;height:19px;background:#d0d0d0"></div>
<div style="left:747px;top:262px;width:1px;height:19px;background:#d0d0d0"></div>
<div style="left:826px;top:262px;width:1px;height:19px;background:#d08a50"></div>
<div style="left:875px;top:262px;width:1px;height:19px;background:#d0d0d0"></div>
<div style="left:910px;top:262px;width:1px;height:19px;background:#d0d0d0"></div>
<div style="left:959px;top:262px;width:1px;height:19px;background:#d0d0d0"></div>
<div style="left:980px;top:262px;width:1px;height:19px;background:#d0d0d0"></div>
<div style="left:1064px;top:262px;width:1px;height:19px;background:#d0d0d0"></div>
<div style="left:1113px;top:262px;width:1px;height:19px;background:#d0d0d0"></div>
<svg style="left:26px;top:263px" width="16" height="16" viewBox="0 0 16 16">
<path d="M1.3 1.3L3.3 3.3M14.7 1.3L12.7 3.3M1.3 14.7L3.3 12.7M14.7 14.7L12.7 12.7" stroke="#222" stroke-width="0.9"/>
<circle cx="8" cy="8" r="5.5" fill="#ff0000" stroke="#000" stroke-width="1.3"/>
<circle cx="8" cy="8" r="4.4" fill="none" stroke="#ffb8b8" stroke-width="0.7"/></svg>
<svg style="left:91px;top:266px" width="12" height="12" viewBox="0 0 12 12">
<path d="M6 1.5L10.5 6L6 10.5L1.5 6Z" fill="#9dbcdc" stroke="#2a6a9e" stroke-width="1.3"/></svg>
<div class="t" style="left:134px;top:262px;">1000</div>
<div class="t" style="left:747px;top:262px;width:79px;text-align:right;padding-right:8px">10,00</div>
<div class="t" style="left:1116px;top:262px;letter-spacing:0.25px">DARWICH, MAHMOUD</div>
<div style="left:747px;top:281px;width:79px;height:19px;background:#cde2ef"></div>
<div style="left:6px;top:281px;width:1192px;height:1px;background:#d2d4d6"></div>
<div style="left:747px;top:281px;width:79px;height:1px;background:#dccbc0"></div>
<div style="left:61px;top:281px;width:1px;height:19px;background:#d0d0d0"></div>
<div style="left:131px;top:281px;width:1px;height:19px;background:#d0d0d0"></div>
<div style="left:180px;top:281px;width:1px;height:19px;background:#d0d0d0"></div>
<div style="left:236px;top:281px;width:1px;height:19px;background:#d0d0d0"></div>
<div style="left:285px;top:281px;width:1px;height:19px;background:#d0d0d0"></div>
<div style="left:321px;top:281px;width:1px;height:19px;background:#d0d0d0"></div>
<div style="left:356px;top:281px;width:1px;height:19px;background:#d0d0d0"></div>
<div style="left:439px;top:281px;width:1px;height:19px;background:#d0d0d0"></div>
<div style="left:467px;top:281px;width:1px;height:19px;background:#d0d0d0"></div>
<div style="left:495px;top:281px;width:1px;height:19px;background:#d0d0d0"></div>
<div style="left:635px;top:281px;width:1px;height:19px;background:#d0d0d0"></div>
<div style="left:718px;top:281px;width:1px;height:19px;background:#d0d0d0"></div>
<div style="left:747px;top:281px;width:1px;height:19px;background:#d0d0d0"></div>
<div style="left:826px;top:281px;width:1px;height:19px;background:#d08a50"></div>
<div style="left:875px;top:281px;width:1px;height:19px;background:#d0d0d0"></div>
<div style="left:910px;top:281px;width:1px;height:19px;background:#d0d0d0"></div>
<div style="left:959px;top:281px;width:1px;height:19px;background:#d0d0d0"></div>
<div style="left:980px;top:281px;width:1px;height:19px;background:#d0d0d0"></div>
<div style="left:1064px;top:281px;width:1px;height:19px;background:#d0d0d0"></div>
<div style="left:1113px;top:281px;width:1px;height:19px;background:#d0d0d0"></div>
<svg style="left:26px;top:282px" width="16" height="16" viewBox="0 0 16 16">
<path d="M1.3 1.3L3.3 3.3M14.7 1.3L12.7 3.3M1.3 14.7L3.3 12.7M14.7 14.7L12.7 12.7" stroke="#222" stroke-width="0.9"/>
<circle cx="8" cy="8" r="5.5" fill="#ff0000" stroke="#000" stroke-width="1.3"/>
<circle cx="8" cy="8" r="4.4" fill="none" stroke="#ffb8b8" stroke-width="0.7"/></svg>
<svg style="left:91px;top:285px" width="12" height="12" viewBox="0 0 12 12">
<path d="M6 1.5L10.5 6L6 10.5L1.5 6Z" fill="#9dbcdc" stroke="#2a6a9e" stroke-width="1.3"/></svg>
<div class="t" style="left:134px;top:281px;">1000</div>
<div class="t" style="left:747px;top:281px;width:79px;text-align:right;padding-right:8px">10,00</div>
<div class="t" style="left:1116px;top:281px;letter-spacing:0.25px">STEFFI HOFMANN</div>
<div style="left:747px;top:300px;width:79px;height:19px;background:#cde2ef"></div>
<div style="left:6px;top:300px;width:1192px;height:1px;background:#d2d4d6"></div>
<div style="left:747px;top:300px;width:79px;height:1px;background:#dccbc0"></div>
<div style="left:61px;top:300px;width:1px;height:19px;background:#d0d0d0"></div>
<div style="left:131px;top:300px;width:1px;height:19px;background:#d0d0d0"></div>
<div style="left:180px;top:300px;width:1px;height:19px;background:#d0d0d0"></div>
<div style="left:236px;top:300px;width:1px;height:19px;background:#d0d0d0"></div>
<div style="left:285px;top:300px;width:1px;height:19px;background:#d0d0d0"></div>
<div style="left:321px;top:300px;width:1px;height:19px;background:#d0d0d0"></div>
<div style="left:356px;top:300px;width:1px;height:19px;background:#d0d0d0"></div>
<div style="left:439px;top:300px;width:1px;height:19px;background:#d0d0d0"></div>
<div style="left:467px;top:300px;width:1px;height:19px;background:#d0d0d0"></div>
<div style="left:495px;top:300px;width:1px;height:19px;background:#d0d0d0"></div>
<div style="left:635px;top:300px;width:1px;height:19px;background:#d0d0d0"></div>
<div style="left:718px;top:300px;width:1px;height:19px;background:#d0d0d0"></div>
<div style="left:747px;top:300px;width:1px;height:19px;background:#d0d0d0"></div>
<div style="left:826px;top:300px;width:1px;height:19px;background:#d08a50"></div>
<div style="left:875px;top:300px;width:1px;height:19px;background:#d0d0d0"></div>
<div style="left:910px;top:300px;width:1px;height:19px;background:#d0d0d0"></div>
<div style="left:959px;top:300px;width:1px;height:19px;background:#d0d0d0"></div>
<div style="left:980px;top:300px;width:1px;height:19px;background:#d0d0d0"></div>
<div style="left:1064px;top:300px;width:1px;height:19px;background:#d0d0d0"></div>
<div style="left:1113px;top:300px;width:1px;height:19px;background:#d0d0d0"></div>
<svg style="left:26px;top:301px" width="16" height="16" viewBox="0 0 16 16">
<path d="M1.3 1.3L3.3 3.3M14.7 1.3L12.7 3.3M1.3 14.7L3.3 12.7M14.7 14.7L12.7 12.7" stroke="#222" stroke-width="0.9"/>
<circle cx="8" cy="8" r="5.5" fill="#ff0000" stroke="#000" stroke-width="1.3"/>
<circle cx="8" cy="8" r="4.4" fill="none" stroke="#ffb8b8" stroke-width="0.7"/></svg>
<svg style="left:89px;top:301px" width="16" height="16" viewBox="0 0 16 16">
<path d="M1.3 1.3L3.3 3.3M14.7 1.3L12.7 3.3M1.3 14.7L3.3 12.7M14.7 14.7L12.7 12.7" stroke="#222" stroke-width="0.9"/>
<circle cx="8" cy="8" r="5.5" fill="#ff0000" stroke="#000" stroke-width="1.3"/>
<circle cx="8" cy="8" r="4.4" fill="none" stroke="#ffb8b8" stroke-width="0.7"/></svg>
<div class="t" style="left:134px;top:300px;">1000</div>
<div class="t" style="left:747px;top:300px;width:79px;text-align:right;padding-right:8px">10,90</div>
<div class="t" style="left:1116px;top:300px;letter-spacing:0.25px">CACM GMBH</div>
<div style="left:747px;top:319px;width:79px;height:19px;background:#cde2ef"></div>
<div style="left:6px;top:319px;width:1192px;height:1px;background:#d2d4d6"></div>
<div style="left:747px;top:319px;width:79px;height:1px;background:#dccbc0"></div>
<div style="left:61px;top:319px;width:1px;height:19px;background:#d0d0d0"></div>
<div style="left:131px;top:319px;width:1px;height:19px;background:#d0d0d0"></div>
<div style="left:180px;top:319px;width:1px;height:19px;background:#d0d0d0"></div>
<div style="left:236px;top:319px;width:1px;height:19px;background:#d0d0d0"></div>
<div style="left:285px;top:319px;width:1px;height:19px;background:#d0d0d0"></div>
<div style="left:321px;top:319px;width:1px;height:19px;background:#d0d0d0"></div>
<div style="left:356px;top:319px;width:1px;height:19px;background:#d0d0d0"></div>
<div style="left:439px;top:319px;width:1px;height:19px;background:#d0d0d0"></div>
<div style="left:467px;top:319px;width:1px;height:19px;background:#d0d0d0"></div>
<div style="left:495px;top:319px;width:1px;height:19px;background:#d0d0d0"></div>
<div style="left:635px;top:319px;width:1px;height:19px;background:#d0d0d0"></div>
<div style="left:718px;top:319px;width:1px;height:19px;background:#d0d0d0"></div>
<div style="left:747px;top:319px;width:1px;height:19px;background:#d0d0d0"></div>
<div style="left:826px;top:319px;width:1px;height:19px;background:#d08a50"></div>
<div style="left:875px;top:319px;width:1px;height:19px;background:#d0d0d0"></div>
<div style="left:910px;top:319px;width:1px;height:19px;background:#d0d0d0"></div>
<div style="left:959px;top:319px;width:1px;height:19px;background:#d0d0d0"></div>
<div style="left:980px;top:319px;width:1px;height:19px;background:#d0d0d0"></div>
<div style="left:1064px;top:319px;width:1px;height:19px;background:#d0d0d0"></div>
<div style="left:1113px;top:319px;width:1px;height:19px;background:#d0d0d0"></div>
<svg style="left:28px;top:322px" width="12" height="12" viewBox="0 0 12 12">
<rect x="0.7" y="0.7" width="10.6" height="10.6" rx="1.6" fill="#00ee00" stroke="#000" stroke-width="1.3"/>
<rect x="2" y="2" width="8" height="8" fill="none" stroke="#8cff8c" stroke-width="0.6"/></svg>
<svg style="left:91px;top:322px" width="12" height="12" viewBox="0 0 12 12">
<rect x="0.7" y="0.7" width="10.6" height="10.6" rx="1.6" fill="#00ee00" stroke="#000" stroke-width="1.3"/>
<rect x="2" y="2" width="8" height="8" fill="none" stroke="#8cff8c" stroke-width="0.6"/></svg>
<div class="t" style="left:134px;top:319px;">1000</div>
<div class="t" style="left:747px;top:319px;width:79px;text-align:right;padding-right:8px">15,00</div>
<div class="t" style="left:1116px;top:319px;letter-spacing:0.25px">KKH-ALLIANZ</div>
<div style="left:747px;top:338px;width:79px;height:19px;background:#cde2ef"></div>
<div style="left:6px;top:338px;width:1192px;height:1px;background:#d2d4d6"></div>
<div style="left:747px;top:338px;width:79px;height:1px;background:#dccbc0"></div>
<div style="left:61px;top:338px;width:1px;height:19px;background:#d0d0d0"></div>
<div style="left:131px;top:338px;width:1px;height:19px;background:#d0d0d0"></div>
<div style="left:180px;top:338px;width:1px;height:19px;background:#d0d0d0"></div>
<div style="left:236px;top:338px;width:1px;height:19px;background:#d0d0d0"></div>
<div style="left:285px;top:338px;width:1px;height:19px;background:#d0d0d0"></div>
<div style="left:321px;top:338px;width:1px;height:19px;background:#d0d0d0"></div>
<div style="left:356px;top:338px;width:1px;height:19px;background:#d0d0d0"></div>
<div style="left:439px;top:338px;width:1px;height:19px;background:#d0d0d0"></div>
<div style="left:467px;top:338px;width:1px;height:19px;background:#d0d0d0"></div>
<div style="left:495px;top:338px;width:1px;height:19px;background:#d0d0d0"></div>
<div style="left:635px;top:338px;width:1px;height:19px;background:#d0d0d0"></div>
<div style="left:718px;top:338px;width:1px;height:19px;background:#d0d0d0"></div>
<div style="left:747px;top:338px;width:1px;height:19px;background:#d0d0d0"></div>
<div style="left:826px;top:338px;width:1px;height:19px;background:#d08a50"></div>
<div style="left:875px;top:338px;width:1px;height:19px;background:#d0d0d0"></div>
<div style="left:910px;top:338px;width:1px;height:19px;background:#d0d0d0"></div>
<div style="left:959px;top:338px;width:1px;height:19px;background:#d0d0d0"></div>
<div style="left:980px;top:338px;width:1px;height:19px;background:#d0d0d0"></div>
<div style="left:1064px;top:338px;width:1px;height:19px;background:#d0d0d0"></div>
<div style="left:1113px;top:338px;width:1px;height:19px;background:#d0d0d0"></div>
<svg style="left:26px;top:339px" width="16" height="16" viewBox="0 0 16 16">
<path d="M1.3 1.3L3.3 3.3M14.7 1.3L12.7 3.3M1.3 14.7L3.3 12.7M14.7 14.7L12.7 12.7" stroke="#222" stroke-width="0.9"/>
<circle cx="8" cy="8" r="5.5" fill="#ff0000" stroke="#000" stroke-width="1.3"/>
<circle cx="8" cy="8" r="4.4" fill="none" stroke="#ffb8b8" stroke-width="0.7"/></svg>
<svg style="left:89px;top:339px" width="16" height="16" viewBox="0 0 16 16">
<path d="M1.3 1.3L3.3 3.3M14.7 1.3L12.7 3.3M1.3 14.7L3.3 12.7M14.7 14.7L12.7 12.7" stroke="#222" stroke-width="0.9"/>
<circle cx="8" cy="8" r="5.5" fill="#ff0000" stroke="#000" stroke-width="1.3"/>
<circle cx="8" cy="8" r="4.4" fill="none" stroke="#ffb8b8" stroke-width="0.7"/></svg>
<div class="t" style="left:134px;top:338px;">1000</div>
<div class="t" style="left:747px;top:338px;width:79px;text-align:right;padding-right:8px">15,00</div>
<div class="t" style="left:1116px;top:338px;letter-spacing:0.25px">ZZST HAMBURG</div>
<div style="left:747px;top:357px;width:79px;height:19px;background:#cde2ef"></div>
<div style="left:6px;top:357px;width:1192px;height:1px;background:#d2d4d6"></div>
<div style="left:747px;top:357px;width:79px;height:1px;background:#dccbc0"></div>
<div style="left:61px;top:357px;width:1px;height:19px;background:#d0d0d0"></div>
<div style="left:131px;top:357px;width:1px;height:19px;background:#d0d0d0"></div>
<div style="left:180px;top:357px;width:1px;height:19px;background:#d0d0d0"></div>
<div style="left:236px;top:357px;width:1px;height:19px;background:#d0d0d0"></div>
<div style="left:285px;top:357px;width:1px;height:19px;background:#d0d0d0"></div>
<div style="left:321px;top:357px;width:1px;height:19px;background:#d0d0d0"></div>
<div style="left:356px;top:357px;width:1px;height:19px;background:#d0d0d0"></div>
<div style="left:439px;top:357px;width:1px;height:19px;background:#d0d0d0"></div>
<div style="left:467px;top:357px;width:1px;height:19px;background:#d0d0d0"></div>
<div style="left:495px;top:357px;width:1px;height:19px;background:#d0d0d0"></div>
<div style="left:635px;top:357px;width:1px;height:19px;background:#d0d0d0"></div>
<div style="left:718px;top:357px;width:1px;height:19px;background:#d0d0d0"></div>
<div style="left:747px;top:357px;width:1px;height:19px;background:#d0d0d0"></div>
<div style="left:826px;top:357px;width:1px;height:19px;background:#d08a50"></div>
<div style="left:875px;top:357px;width:1px;height:19px;background:#d0d0d0"></div>
<div style="left:910px;top:357px;width:1px;height:19px;background:#d0d0d0"></div>
<div style="left:959px;top:357px;width:1px;height:19px;background:#d0d0d0"></div>
<div style="left:980px;top:357px;width:1px;height:19px;background:#d0d0d0"></div>
<div style="left:1064px;top:357px;width:1px;height:19px;background:#d0d0d0"></div>
<div style="left:1113px;top:357px;width:1px;height:19px;background:#d0d0d0"></div>
<svg style="left:26px;top:358px" width="16" height="16" viewBox="0 0 16 16">
<path d="M1.3 1.3L3.3 3.3M14.7 1.3L12.7 3.3M1.3 14.7L3.3 12.7M14.7 14.7L12.7 12.7" stroke="#222" stroke-width="0.9"/>
<circle cx="8" cy="8" r="5.5" fill="#ff0000" stroke="#000" stroke-width="1.3"/>
<circle cx="8" cy="8" r="4.4" fill="none" stroke="#ffb8b8" stroke-width="0.7"/></svg>
<svg style="left:91px;top:361px" width="12" height="12" viewBox="0 0 12 12">
<path d="M6 1.5L10.5 6L6 10.5L1.5 6Z" fill="#9dbcdc" stroke="#2a6a9e" stroke-width="1.3"/></svg>
<div class="t" style="left:134px;top:357px;">1000</div>
<div class="t" style="left:747px;top:357px;width:79px;text-align:right;padding-right:8px">15,47</div>
<div class="t" style="left:1116px;top:357px;letter-spacing:0.25px">YILDIRIM</div>
<div style="left:747px;top:376px;width:79px;height:19px;background:#cde2ef"></div>
<div style="left:6px;top:376px;width:1192px;height:1px;background:#d2d4d6"></div>
<div style="left:747px;top:376px;width:79px;height:1px;background:#dccbc0"></div>
<div style="left:61px;top:376px;width:1px;height:19px;background:#d0d0d0"></div>
<div style="left:131px;top:376px;width:1px;height:19px;background:#d0d0d0"></div>
<div style="left:180px;top:376px;width:1px;height:19px;background:#d0d0d0"></div>
<div style="left:236px;top:376px;width:1px;height:19px;background:#d0d0d0"></div>
<div style="left:285px;top:376px;width:1px;height:19px;background:#d0d0d0"></div>
<div style="left:321px;top:376px;width:1px;height:19px;background:#d0d0d0"></div>
<div style="left:356px;top:376px;width:1px;height:19px;background:#d0d0d0"></div>
<div style="left:439px;top:376px;width:1px;height:19px;background:#d0d0d0"></div>
<div style="left:467px;top:376px;width:1px;height:19px;background:#d0d0d0"></div>
<div style="left:495px;top:376px;width:1px;height:19px;background:#d0d0d0"></div>
<div style="left:635px;top:376px;width:1px;height:19px;background:#d0d0d0"></div>
<div style="left:718px;top:376px;width:1px;height:19px;background:#d0d0d0"></div>
<div style="left:747px;top:376px;width:1px;height:19px;background:#d0d0d0"></div>
<div style="left:826px;top:376px;width:1px;height:19px;background:#d08a50"></div>
<div style="left:875px;top:376px;width:1px;height:19px;background:#d0d0d0"></div>
<div style="left:910px;top:376px;width:1px;height:19px;background:#d0d0d0"></div>
<div style="left:959px;top:376px;width:1px;height:19px;background:#d0d0d0"></div>
<div style="left:980px;top:376px;width:1px;height:19px;background:#d0d0d0"></div>
<div style="left:1064px;top:376px;width:1px;height:19px;background:#d0d0d0"></div>
<div style="left:1113px;top:376px;width:1px;height:19px;background:#d0d0d0"></div>
<svg style="left:26px;top:377px" width="16" height="16" viewBox="0 0 16 16">
<path d="M1.3 1.3L3.3 3.3M14.7 1.3L12.7 3.3M1.3 14.7L3.3 12.7M14.7 14.7L12.7 12.7" stroke="#222" stroke-width="0.9"/>
<circle cx="8" cy="8" r="5.5" fill="#ff0000" stroke="#000" stroke-width="1.3"/>
<circle cx="8" cy="8" r="4.4" fill="none" stroke="#ffb8b8" stroke-width="0.7"/></svg>
<svg style="left:89px;top:377px" width="16" height="16" viewBox="0 0 16 16">
<path d="M1.3 1.3L3.3 3.3M14.7 1.3L12.7 3.3M1.3 14.7L3.3 12.7M14.7 14.7L12.7 12.7" stroke="#222" stroke-width="0.9"/>
<circle cx="8" cy="8" r="5.5" fill="#ff0000" stroke="#000" stroke-width="1.3"/>
<circle cx="8" cy="8" r="4.4" fill="none" stroke="#ffb8b8" stroke-width="0.7"/></svg>
<div class="t" style="left:134px;top:376px;">1000</div>
<div class="t" style="left:747px;top:376px;width:79px;text-align:right;padding-right:8px">16,47</div>
<div class="t" style="left:1116px;top:376px;letter-spacing:0.25px">KLINIKUM DELMENHORST</div>
<div style="left:747px;top:395px;width:79px;height:19px;background:#cde2ef"></div>
<div style="left:6px;top:395px;width:1192px;height:1px;background:#d2d4d6"></div>
<div style="left:747px;top:395px;width:79px;height:1px;background:#dccbc0"></div>
<div style="left:61px;top:395px;width:1px;height:19px;background:#d0d0d0"></div>
<div style="left:131px;top:395px;width:1px;height:19px;background:#d0d0d0"></div>
<div style="left:180px;top:395px;width:1px;height:19px;background:#d0d0d0"></div>
<div style="left:236px;top:395px;width:1px;height:19px;background:#d0d0d0"></div>
<div style="left:285px;top:395px;width:1px;height:19px;background:#d0d0d0"></div>
<div style="left:321px;top:395px;width:1px;height:19px;background:#d0d0d0"></div>
<div style="left:356px;top:395px;width:1px;height:19px;background:#d0d0d0"></div>
<div style="left:439px;top:395px;width:1px;height:19px;background:#d0d0d0"></div>
<div style="left:467px;top:395px;width:1px;height:19px;background:#d0d0d0"></div>
<div style="left:495px;top:395px;width:1px;height:19px;background:#d0d0d0"></div>
<div style="left:635px;top:395px;width:1px;height:19px;background:#d0d0d0"></div>
<div style="left:718px;top:395px;width:1px;height:19px;background:#d0d0d0"></div>
<div style="left:747px;top:395px;width:1px;height:19px;background:#d0d0d0"></div>
<div style="left:826px;top:395px;width:1px;height:19px;background:#d08a50"></div>
<div style="left:875px;top:395px;width:1px;height:19px;background:#d0d0d0"></div>
<div style="left:910px;top:395px;width:1px;height:19px;background:#d0d0d0"></div>
<div style="left:959px;top:395px;width:1px;height:19px;background:#d0d0d0"></div>
<div style="left:980px;top:395px;width:1px;height:19px;background:#d0d0d0"></div>
<div style="left:1064px;top:395px;width:1px;height:19px;background:#d0d0d0"></div>
<div style="left:1113px;top:395px;width:1px;height:19px;background:#d0d0d0"></div>
<svg style="left:26px;top:396px" width="16" height="16" viewBox="0 0 16 16">
<path d="M1.3 1.3L3.3 3.3M14.7 1.3L12.7 3.3M1.3 14.7L3.3 12.7M14.7 14.7L12.7 12.7" stroke="#222" stroke-width="0.9"/>
<circle cx="8" cy="8" r="5.5" fill="#ff0000" stroke="#000" stroke-width="1.3"/>
<circle cx="8" cy="8" r="4.4" fill="none" stroke="#ffb8b8" stroke-width="0.7"/></svg>
<svg style="left:89px;top:396px" width="16" height="16" viewBox="0 0 16 16">
<path d="M1.3 1.3L3.3 3.3M14.7 1.3L12.7 3.3M1.3 14.7L3.3 12.7M14.7 14.7L12.7 12.7" stroke="#222" stroke-width="0.9"/>
<circle cx="8" cy="8" r="5.5" fill="#ff0000" stroke="#000" stroke-width="1.3"/>
<circle cx="8" cy="8" r="4.4" fill="none" stroke="#ffb8b8" stroke-width="0.7"/></svg>
<div class="t" style="left:134px;top:395px;">1000</div>
<div class="t" style="left:747px;top:395px;width:79px;text-align:right;padding-right:8px">18,14</div>
<div class="t" style="left:1116px;top:395px;letter-spacing:0.25px">BENDEL INSOLVENZ</div>
<div style="left:747px;top:414px;width:79px;height:19px;background:#cde2ef"></div>
<div style="left:6px;top:414px;width:1192px;height:1px;background:#d2d4d6"></div>
<div style="left:747px;top:414px;width:79px;height:1px;background:#dccbc0"></div>
<div style="left:61px;top:414px;width:1px;height:19px;background:#d0d0d0"></div>
<div style="left:131px;top:414px;width:1px;height:19px;background:#d0d0d0"></div>
<div style="left:180px;top:414px;width:1px;height:19px;background:#d0d0d0"></div>
<div style="left:236px;top:414px;width:1px;height:19px;background:#d0d0d0"></div>
<div style="left:285px;top:414px;width:1px;height:19px;background:#d0d0d0"></div>
<div style="left:321px;top:414px;width:1px;height:19px;background:#d0d0d0"></div>
<div style="left:356px;top:414px;width:1px;height:19px;background:#d0d0d0"></div>
<div style="left:439px;top:414px;width:1px;height:19px;background:#d0d0d0"></div>
<div style="left:467px;top:414px;width:1px;height:19px;background:#d0d0d0"></div>
<div style="left:495px;top:414px;width:1px;height:19px;background:#d0d0d0"></div>
<div style="left:635px;top:414px;width:1px;height:19px;background:#d0d0d0"></div>
<div style="left:718px;top:414px;width:1px;height:19px;background:#d0d0d0"></div>
<div style="left:747px;top:414px;width:1px;height:19px;background:#d0d0d0"></div>
<div style="left:826px;top:414px;width:1px;height:19px;background:#d08a50"></div>
<div style="left:875px;top:414px;width:1px;height:19px;background:#d0d0d0"></div>
<div style="left:910px;top:414px;width:1px;height:19px;background:#d0d0d0"></div>
<div style="left:959px;top:414px;width:1px;height:19px;background:#d0d0d0"></div>
<div style="left:980px;top:414px;width:1px;height:19px;background:#d0d0d0"></div>
<div style="left:1064px;top:414px;width:1px;height:19px;background:#d0d0d0"></div>
<div style="left:1113px;top:414px;width:1px;height:19px;background:#d0d0d0"></div>
<svg style="left:26px;top:415px" width="16" height="16" viewBox="0 0 16 16">
<path d="M1.3 1.3L3.3 3.3M14.7 1.3L12.7 3.3M1.3 14.7L3.3 12.7M14.7 14.7L12.7 12.7" stroke="#222" stroke-width="0.9"/>
<circle cx="8" cy="8" r="5.5" fill="#ff0000" stroke="#000" stroke-width="1.3"/>
<circle cx="8" cy="8" r="4.4" fill="none" stroke="#ffb8b8" stroke-width="0.7"/></svg>
<svg style="left:89px;top:415px" width="16" height="16" viewBox="0 0 16 16">
<path d="M1.3 1.3L3.3 3.3M14.7 1.3L12.7 3.3M1.3 14.7L3.3 12.7M14.7 14.7L12.7 12.7" stroke="#222" stroke-width="0.9"/>
<circle cx="8" cy="8" r="5.5" fill="#ff0000" stroke="#000" stroke-width="1.3"/>
<circle cx="8" cy="8" r="4.4" fill="none" stroke="#ffb8b8" stroke-width="0.7"/></svg>
</div>
<div class="t" style="left:183px;top:91px;">1001</div>
<div class="t" style="left:239px;top:91px;">GIRO</div>
<div class="t" style="left:285px;top:91px;width:36px;text-align:right;padding-right:6px"><u>7</u></div>
<div class="t" style="left:321px;top:91px;width:35px;text-align:right;padding-right:6px"><u>1</u></div>
<div class="t" style="left:359px;top:91px;">19.04.1999</div>
<div class="t" style="left:443px;top:91px;">020</div>
<div class="t" style="left:638px;top:91px;">19.04.1999</div>
<div class="t" style="left:721px;top:91px;">EUR</div>
<div class="t" style="left:829px;top:319px;">Kreditor</div>
<div class="t" style="left:878px;top:319px;"><u>300</u></div>
<div style="left:5px;top:72px;width:1px;height:346px;background:#c8c8c8"></div>
<div style="left:1px;top:418px;width:1197px;height:5px;background:#c8c8c8"></div>
<div style="left:936.0px;top:419px;width:2px;height:2px;background:#333;box-shadow:1px 1px 0 #fff"></div>
<div style="left:940.3px;top:419px;width:2px;height:2px;background:#333;box-shadow:1px 1px 0 #fff"></div>
<div style="left:944.6px;top:419px;width:2px;height:2px;background:#333;box-shadow:1px 1px 0 #fff"></div>
<div style="left:948.9px;top:419px;width:2px;height:2px;background:#333;box-shadow:1px 1px 0 #fff"></div>
<div style="left:953.2px;top:419px;width:2px;height:2px;background:#333;box-shadow:1px 1px 0 #fff"></div>
<div style="left:4px;top:431px;width:1194px;height:211px;background:#ffffff;border-left:1px solid #e0e0e0;border-top:1px solid #e2e2e2"></div>
<div class="t" style="left:12px;top:431px;letter-spacing:0px">Kontoauszug 7 vom 19.04.1999 Position 1</div>
<div class="t" style="left:700px;top:431px;width:122px;text-align:right">(geändert)</div>
<div style="left:7px;top:447px;width:1191px;height:2px;background:#0a79c1"></div>
<div style="left:771px;top:453px;width:427px;height:1px;background:#444"></div>
<div style="left:771px;top:455px;width:427px;height:1px;background:#444"></div>
<div style="left:771px;top:604px;width:427px;height:2px;background:#333"></div>
<div class="t" style="left:13px;top:455px;">Vorgang</div>
<div style="left:11px;top:472px;width:112px;height:1px;background:#c8c8c8"></div>
<div class="t" style="left:13px;top:477px;">Partner</div>
<div style="left:11px;top:494px;width:112px;height:1px;background:#c8c8c8"></div>
<div class="t" style="left:13px;top:521px;">Valutadatum</div>
<div style="left:11px;top:538px;width:112px;height:1px;background:#c8c8c8"></div>
<div class="t" style="left:13px;top:543px;">Buchungsdatum</div>
<div style="left:11px;top:560px;width:112px;height:1px;background:#c8c8c8"></div>
<div class="t" style="left:13px;top:565px;">FremdWBetrag</div>
<div style="left:11px;top:582px;width:112px;height:1px;background:#c8c8c8"></div>
<div style="left:11px;top:497px;width:110px;height:20px;background:#fff;border:1px solid #b4b4b4"></div>
<div class="t" style="left:15px;top:498px;">Sachkonto</div>
<svg style="left:109px;top:505px" width="10" height="7"><path d="M1 1.5L4.5 5L8 1.5" fill="none" stroke="#555" stroke-width="1.6"/></svg>
<div style="left:123px;top:453px;width:60px;height:19px;background:#fff;border:1px solid #c8c8c8;border-right:none"></div>
<div class="t" style="left:127px;top:453px;">Unbekannt</div>
<div style="left:123px;top:475px;width:60px;height:19px;background:#e5e8ec"></div>
<div style="left:123px;top:497px;width:60px;height:20px;background:#fff;border:1px solid #c8c8c8;border-right:none"></div>
<div style="left:123px;top:519px;width:60px;height:19px;background:#e5e8ec"></div>
<div class="t m" style="left:126px;top:519px;">19.04.1999</div>
<div style="left:123px;top:541px;width:60px;height:19px;background:#fff;border:1px solid #c8c8c8;border-right:none"></div>
<div class="t m" style="left:126px;top:541px;">19.04.1999</div>
<div style="left:123px;top:563px;width:60px;height:19px;background:#e5e8ec"></div>
<div class="t m" style="left:126px;top:563px;">0,00</div>
<div style="left:12px;top:588px;width:13px;height:13px;background:#eceff2;border:1px solid #c4c4c4"></div>
<div class="t" style="left:27px;top:587px;color:#9a9a9a">mit Kurs berechnen</div>
<div style="left:10px;top:604px;width:168px;height:1px;background:#d0d0d0"></div>
<div style="left:11px;top:607px;width:48px;height:21px;background:#dedede;border:1px solid #a8a8a8"></div>
<svg style="left:27px;top:609px" width="16" height="16" viewBox="0 0 16 16">
<rect x="1" y="8" width="7" height="6" fill="#6cb33f"/>
<path d="M4 7V4.5H9V2L13 6L9 10V8H6V7Z" fill="#f5b800" stroke="#8a6a00" stroke-width="0.5"/></svg>
<div style="left:771px;top:607px;width:5px;height:20px;background:#dedede;border:1px solid #a8a8a8;border-left:none"></div>
<div style="left:777px;top:607px;width:25px;height:20px;background:#dedede;border:1px solid #a8a8a8"></div>
<svg style="left:781px;top:609px" width="18" height="16" viewBox="0 0 18 16">
<circle cx="5" cy="5.5" r="3.4" fill="#6cb33f" stroke="#3a8a20" stroke-width="0.5"/>
<circle cx="12.5" cy="12" r="3.4" fill="#e0501c" stroke="#a03010" stroke-width="0.5"/>
<path d="M9.5 2.5Q13 2.5 13.5 6M12 5L13.5 6.5L15 5M8 13.5Q4.5 13.5 4 10M2.5 11L4 9.5L5.5 11" fill="none" stroke="#444" stroke-width="1"/></svg>
<div style="left:15px;top:654px;width:69px;height:17px;background:#fff;border:1px solid #b4b4b4;border-bottom:none"></div>
<div class="t" style="left:26px;top:655px;">Belege</div>
<div style="left:84px;top:653px;width:93px;height:18px;background:#0a79c1"></div>
<div class="t" style="left:95px;top:655px;color:#fff">Zuordnung</div>
<div style="left:4px;top:671px;width:1194px;height:2px;background:#0a79c1"></div>
<div style="left:4px;top:673px;width:1194px;height:1px;background:#fafafa"></div>
<div style="left:4px;top:674px;width:1194px;height:36px;background:#e4e4e4"></div>
<div style="left:33px;top:696px;width:823px;height:14px;background:#ffffff"></div>
<div style="left:11px;top:694px;width:20px;height:20px;background:#f2f2f2;border:1px solid #a0a0a0;box-shadow:inset 0 1px 0 #fff"></div>
<svg style="left:14px;top:697px" width="15" height="13" viewBox="0 0 15 13">
<path d="M1 3V13M1 3H3M9 2.5H13V13" fill="none" stroke="#555" stroke-width="1.2"/>
<rect x="4.5" y="4.5" width="6" height="9" fill="#fff" stroke="#0a5e94" stroke-width="1.1"/>
<path d="M6 9H9" stroke="#0a5e94" stroke-width="1"/>
<path d="M2 0.5H9L5.5 4.5Z" fill="#6cb33f"/></svg>
<div class="t" style="left:40px;top:695px;">Posten hinzulesen</div>
<div style="left:177px;top:110px;width:595px;height:563px;background:#f2f2f2;border:1px solid #2a2a2a;border-radius:3px 3px 0 0;box-shadow:1px 3px 4px rgba(0,0,0,0.4)"></div>
<div style="left:177px;top:110px;width:595px;height:14px;background:#4c4c4c;border-radius:3px 3px 0 0"></div>
<div style="left:177px;top:124px;width:595px;height:13px;background:#313131"></div>
<div style="left:770px;top:110px;width:2px;height:563px;background:#363636"></div>
<svg style="left:184px;top:118px" width="16" height="12" viewBox="0 0 16 12">
<path d="M10 1H1V10H10" fill="none" stroke="#8e8e8e" stroke-width="2"/>
<path d="M5 3.2H15L12 8.2H5Z" fill="#8e8e8e"/></svg>
<div class="t" style="left:202px;top:115px;color:#cfcfcf">Layout ändern</div>
<svg style="left:753px;top:118px" width="10" height="10" viewBox="0 0 10 10"><path d="M0.5 0.5L9.5 9.5M9.5 0.5L0.5 9.5" stroke="#a0a0a0" stroke-width="1.6"/></svg>
<div class="t" style="left:190px;top:147px;">Aktuelles Layout</div>
<div style="left:188px;top:164px;width:147px;height:1px;background:#c8c8c8"></div>
<div style="left:335px;top:145px;width:412px;height:20px;background:#eceff2;border:1px solid #c4c4c4"></div>
<div class="t m" style="left:338px;top:145px;">Z_DEMO ( Demo Video )</div>
<div style="left:199px;top:192px;width:116px;height:17px;background:#ffffff;border:1px solid #b4b4b4;border-bottom:none"></div>
<div class="t" style="left:210px;top:193px;">Spaltenauswahl</div>
<div style="left:315px;top:191px;width:88px;height:18px;background:#0a79c1"></div>
<div class="t" style="left:326px;top:193px;color:#fff">Sortierung</div>
<div style="left:403px;top:192px;width:55px;height:17px;background:#ffffff;border:1px solid #b4b4b4;border-bottom:none;border-left:none"></div>
<div class="t" style="left:416px;top:193px;">Filter</div>
<div style="left:458px;top:192px;width:69px;height:17px;background:#ffffff;border:1px solid #b4b4b4;border-bottom:none"></div>
<div class="t" style="left:471px;top:193px;">Ansicht</div>
<div style="left:527px;top:192px;width:89px;height:17px;background:#ffffff;border:1px solid #b4b4b4;border-bottom:none"></div>
<div class="t" style="left:540px;top:193px;">Darstellung</div>
<div style="left:188px;top:209px;width:565px;height:2px;background:#0a79c1"></div>
<div style="left:188px;top:211px;width:565px;height:410px;background:#e4e4e4;border-top:1px solid #f8f8f8"></div>
<div style="left:202px;top:233px;width:251px;height:351px;background:#f2f2f2;border:1px solid #d0d0d0"></div>
<div style="left:204px;top:236px;width:24px;height:20px;background:#e4e4e4;border:1px solid #a8a8a8;box-shadow:inset 0 1px 0 #fff"></div>
<svg style="left:208px;top:239px" width="16" height="15" viewBox="0 0 16 15">
<path d="M1.7 14.1V6Q1.7 4.8 3.3 4.5V1.9Q3.3 0.8 4.6 0.8Q5.9 0.8 5.9 1.9V4.5H9.7V1.9Q9.7 0.8 11 0.8Q12.3 0.8 12.3 1.9V4.5Q13.9 4.8 13.9 6V14.1H9.6V8.2Q9.6 7 8.4 7H7.2Q6 7 6 8.2V14.1Z" fill="#a6cdee" stroke="#0a5e94" stroke-width="1.2" stroke-linejoin="round"/></svg>
<div style="left:232px;top:241px;width:1px;height:10px;background:#a0a0a0"></div>
<div style="left:238px;top:236px;width:24px;height:20px;background:#e4e4e4;border:1px solid #a8a8a8;box-shadow:inset 0 1px 0 #fff"></div>
<svg style="left:240px;top:238px" width="19" height="17"><path d="M3.5 10.5L9.5 4.5L15.5 10.5Z" fill="#000"/></svg>
<div style="left:264px;top:236px;width:24px;height:20px;background:#e4e4e4;border:1px solid #a8a8a8;box-shadow:inset 0 1px 0 #fff"></div>
<svg style="left:266px;top:238px" width="19" height="17"><path d="M3.5 5.5L9.5 11.5L15.5 5.5Z" fill="#000"/></svg>
<div style="left:290px;top:236px;width:24px;height:20px;background:#e4e4e4;border:1px solid #a8a8a8;box-shadow:inset 0 1px 0 #fff"></div>
<svg style="left:292px;top:238px" width="19" height="17"><path d="M3.5 8.5L9.5 2.5L15.5 8.5ZM3.5 14L9.5 8L15.5 14Z" fill="#000"/></svg>
<div style="left:316px;top:236px;width:24px;height:20px;background:#e4e4e4;border:1px solid #a8a8a8;box-shadow:inset 0 1px 0 #fff"></div>
<svg style="left:318px;top:238px" width="19" height="17"><path d="M3.5 3L9.5 9L15.5 3ZM3.5 8.5L9.5 14.5L15.5 8.5Z" fill="#000"/></svg>
<div style="left:203px;top:258px;width:249px;height:1px;background:#d8d8d8"></div>
<div style="left:203px;top:259px;width:188px;height:19px;background:#e4e4e4"></div>
<div class="t" style="left:206px;top:261px;">Spaltenname</div>
<div style="left:349px;top:259px;width:1px;height:19px;background:#cdcdcd"></div>
<div style="left:370px;top:259px;width:1px;height:19px;background:#cdcdcd"></div>
<div style="left:391px;top:259px;width:1px;height:40px;background:#d8d8d8"></div>
<svg style="left:353px;top:261px" width="14" height="14" viewBox="0 0 14 14">
<rect x="4.5" y="1" width="5" height="2.6" rx="0.8" fill="#7cc242" stroke="#2f6a20" stroke-width="0.9"/>
<rect x="2.5" y="5.5" width="9" height="2.6" rx="0.8" fill="#bcd4ea" stroke="#0a4a7a" stroke-width="0.9"/>
<rect x="1" y="10" width="12" height="2.6" rx="0.8" fill="#7cc242" stroke="#2f6a20" stroke-width="0.9"/></svg>
<svg style="left:374px;top:261px" width="14" height="14" viewBox="0 0 14 14">
<rect x="1" y="1" width="12" height="2.6" rx="0.8" fill="#7cc242" stroke="#2f6a20" stroke-width="0.9"/>
<rect x="2.5" y="5.5" width="9" height="2.6" rx="0.8" fill="#bcd4ea" stroke="#0a4a7a" stroke-width="0.9"/>
<rect x="4.5" y="10" width="5" height="2.6" rx="0.8" fill="#7cc242" stroke="#2f6a20" stroke-width="0.9"/></svg>
<div style="left:203px;top:278px;width:249px;height:1px;background:#e0e0e0"></div>
<div style="left:203px;top:279px;width:146px;height:19px;background:#e3f0fa"></div>
<div class="t" style="left:206px;top:278px;">Betrag</div>
<div style="left:350px;top:279px;width:41px;height:19px;background:#e8ecf0"></div>
<div style="left:349px;top:279px;width:1px;height:19px;background:#cdcdcd"></div>
<div style="left:370px;top:279px;width:1px;height:19px;background:#cdcdcd"></div>
<svg style="left:352px;top:281px" width="16" height="16"><circle cx="8" cy="8" r="5.5" fill="#fff" stroke="#c4c4c4" stroke-width="1.8"/><circle cx="8" cy="8" r="2.5" fill="#0a79c1"/></svg>
<svg style="left:373px;top:281px" width="16" height="16"><circle cx="8" cy="8" r="5.5" fill="#fff" stroke="#c4c4c4" stroke-width="1.8"/></svg>
<svg style="left:203px;top:279px" width="148" height="20"><path d="M1 7V1H7M140 1H146V7M1 12V18H7M140 18H146V12" fill="none" stroke="#dd0a14" stroke-width="1.8"/></svg>
<div style="left:461px;top:386px;width:20px;height:21px;background:#e4e4e4;border:1px solid #a8a8a8;box-shadow:inset 0 1px 0 #fff"></div>
<svg style="left:466px;top:391px" width="10" height="12"><path d="M2 1L8 6L2 11Z" fill="#000"/></svg>
<div style="left:461px;top:409px;width:20px;height:21px;background:#e4e4e4;border:1px solid #a8a8a8;box-shadow:inset 0 1px 0 #fff"></div>
<svg style="left:466px;top:414px" width="10" height="12"><path d="M8 1L2 6L8 11Z" fill="#000"/></svg>
<div style="left:489px;top:233px;width:251px;height:351px;background:#f2f2f2;border:1px solid #d0d0d0"></div>
<div style="left:491px;top:236px;width:24px;height:20px;background:#e4e4e4;border:1px solid #a8a8a8;box-shadow:inset 0 1px 0 #fff"></div>
<svg style="left:495px;top:239px" width="16" height="15" viewBox="0 0 16 15">
<path d="M1.7 14.1V6Q1.7 4.8 3.3 4.5V1.9Q3.3 0.8 4.6 0.8Q5.9 0.8 5.9 1.9V4.5H9.7V1.9Q9.7 0.8 11 0.8Q12.3 0.8 12.3 1.9V4.5Q13.9 4.8 13.9 6V14.1H9.6V8.2Q9.6 7 8.4 7H7.2Q6 7 6 8.2V14.1Z" fill="#a6cdee" stroke="#0a5e94" stroke-width="1.2" stroke-linejoin="round"/></svg>
<div style="left:490px;top:258px;width:249px;height:1px;background:#d8d8d8"></div>
<div class="t" style="left:492px;top:264px;font-size:20px;line-height:24px;height:24px">Spaltenvorrat</div>
<div style="left:490px;top:291px;width:249px;height:1px;background:#d8d8d8"></div>
<div style="left:490px;top:292px;width:222px;height:19px;background:#e4e4e4"></div>
<div class="t" style="left:493px;top:294px;">Spaltenname</div>
<div style="left:490px;top:311px;width:222px;height:272px;background:#e8ecf0"></div>
<div style="left:717px;top:311px;width:1px;height:272px;background:#c8c8c8"></div>
<div style="left:490px;top:311px;width:228px;height:1px;background:#c8c8c8"></div>
<div style="left:712px;top:312px;width:1px;height:271px;background:#d4d4d4"></div>
<div style="left:491px;top:312px;width:221px;height:19px;background:#c9dff0"></div>
<div style="left:490px;top:311px;width:222px;height:272px;overflow:hidden">
<div class="t" style="left:3px;top:0px">Status der Buchung im Bankbuch</div>
<div class="t" style="left:3px;top:19px">Status der Buchung im Nebenbuch</div>
<div class="t" style="left:3px;top:38px">Bankschlüssel</div>
<div class="t" style="left:3px;top:57px">Buchungskreis</div>
<div class="t" style="left:3px;top:76px">Bankkonto</div>
<div class="t" style="left:3px;top:95px">Hausbank</div>
<div class="t" style="left:3px;top:114px">KurzKey</div>
<div class="t" style="left:3px;top:133px">Konto-Id</div>
<div class="t" style="left:3px;top:152px">Fremdwährung<span style="position:absolute;left:118px">(Kont.)</span></div>
<div class="t" style="left:3px;top:171px">Auszugsnummer</div>
<div class="t" style="left:3px;top:190px">Fremdwährungsbetrag<span style="position:absolute;left:131px">(Kont.)</span></div>
<div class="t" style="left:3px;top:209px">EinzelsatzNummer</div>
<div class="t" style="left:3px;top:228px">Umrechnungskurs</div>
<div class="t" style="left:3px;top:247px">Auszugsdatum</div>
<div class="t" style="left:3px;top:266px">Buchungsperiode</div>
</div>
<svg style="left:723px;top:316px" width="10" height="7"><path d="M1.3 5L5 1.5L8.7 5" fill="none" stroke="#505050" stroke-width="1.9"/></svg>
<svg style="left:723px;top:335px" width="10" height="7"><path d="M1.3 1.5L5 5L8.7 1.5" fill="none" stroke="#505050" stroke-width="1.9"/></svg>
<div style="left:723px;top:349px;width:11px;height:14px;background:#b8c4d0"></div>
<svg style="left:723px;top:551px" width="10" height="7"><path d="M1.3 5L5 1.5L8.7 5" fill="none" stroke="#505050" stroke-width="1.9"/></svg>
<svg style="left:723px;top:570px" width="10" height="7"><path d="M1.3 1.5L5 5L8.7 1.5" fill="none" stroke="#505050" stroke-width="1.9"/></svg>
<div style="left:484px;top:644px;width:20px;height:19px;background:#e6e6e6;border:1px solid #a8a8a8;box-shadow:inset 0 1px 0 #fff"></div>
<svg style="left:486px;top:646px" width="16" height="14"><path d="M2 7L6 11L14 2" fill="none" stroke="#2f7a20" stroke-width="3.4"/><path d="M2 7L6 11L14 2" fill="none" stroke="#7cc242" stroke-width="1.8"/></svg>
<div style="left:506px;top:644px;width:20px;height:19px;background:#e4e4e4;border:1px solid #a8a8a8;box-shadow:inset 0 1px 0 #fff"></div>
<svg style="left:508px;top:646px" width="16" height="15" viewBox="0 0 16 15"><path d="M5.5 1.5H15.5V13.5H5.5M5.5 5.5H15.5M5.5 9.5H15.5M10.5 1.5V13.5M5.5 1.5V3M5.5 12V13.5" fill="none" stroke="#555" stroke-width="1.2"/>
<rect x="0.8" y="5" width="4.6" height="4" fill="#ffd24a" stroke="#e06a10" stroke-width="1.1"/></svg>
<div style="left:528px;top:644px;width:20px;height:19px;background:#e4e4e4;border:1px solid #a8a8a8;box-shadow:inset 0 1px 0 #fff"></div>
<svg style="left:530px;top:646px" width="16" height="15" viewBox="0 0 16 15"><path d="M5.5 1.5H14.5V4.5M5.5 4.5H14.5M10 1.5V4.5M5.5 1.5V3M5.5 8V10.5H7" fill="none" stroke="#555" stroke-width="1.1"/>
<rect x="0.8" y="4" width="4.6" height="4" fill="#ffd24a" stroke="#e06a10" stroke-width="1.1"/>
<rect x="8" y="6" width="7.5" height="8" fill="#a9d0f0" stroke="#0a5e94" stroke-width="1.3"/>
<rect x="10" y="6.5" width="3.5" height="2.5" fill="#fff" stroke="#0a5e94" stroke-width="0.8"/><rect x="10" y="11" width="3.5" height="2" fill="#fff"/></svg>
<div style="left:550px;top:644px;width:103px;height:19px;background:#e4e4e4;border:1px solid #a8a8a8;box-shadow:inset 0 1px 0 #fff"></div>
<svg style="left:552px;top:646px" width="16" height="15" viewBox="0 0 16 15"><path d="M5.5 1.5H14.5V4.5M5.5 4.5H14.5M10 1.5V4.5M5.5 1.5V3M5.5 8V10.5H7" fill="none" stroke="#555" stroke-width="1.1"/>
<rect x="0.8" y="4" width="4.6" height="4" fill="#ffd24a" stroke="#e06a10" stroke-width="1.1"/>
<rect x="8" y="6" width="7.5" height="8" fill="#a9d0f0" stroke="#0a5e94" stroke-width="1.3"/>
<rect x="10" y="6.5" width="3.5" height="2.5" fill="#fff" stroke="#0a5e94" stroke-width="0.8"/><rect x="10" y="11" width="3.5" height="2" fill="#fff"/></svg>
<div class="t" style="left:576px;top:646px;">Sichern als...</div>
<div style="left:655px;top:644px;width:86px;height:19px;background:#e4e4e4;border:1px solid #a8a8a8;box-shadow:inset 0 1px 0 #fff"></div>
<div class="t" style="left:662px;top:646px;">Zurücksetzen</div>
<div style="left:744px;top:644px;width:20px;height:19px;background:#e4e4e4;border:1px solid #a8a8a8;box-shadow:inset 0 1px 0 #fff"></div>
<svg style="left:747px;top:647px" width="14" height="14"><path d="M2 2L12 12M12 2L2 12" stroke="#e0501c" stroke-width="3"/></svg>
</body></html>
